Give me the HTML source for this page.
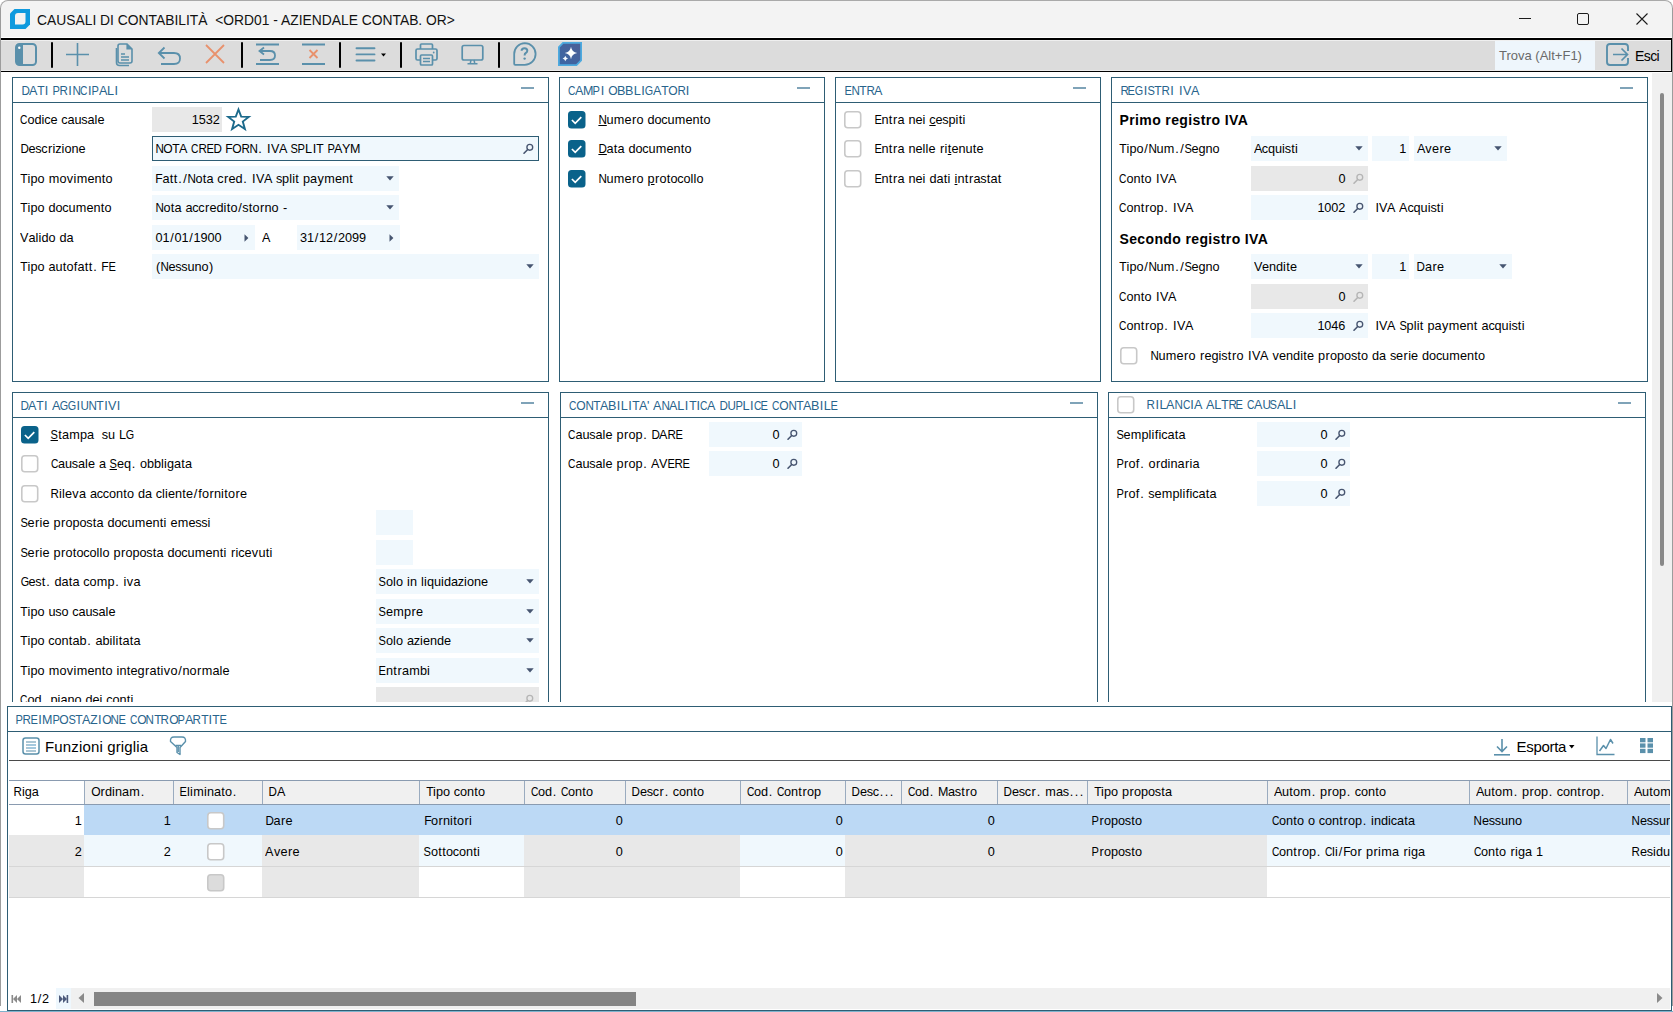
<!DOCTYPE html><html><head><meta charset="utf-8"><style>
html,body{margin:0;padding:0;width:1673px;height:1012px;overflow:hidden;background:#fff;}
body{position:relative;font-family:"Liberation Sans",sans-serif;}
.t{position:absolute;white-space:nowrap;}
.tt{position:absolute;white-space:nowrap;}
.tt b{position:absolute;top:0;font-weight:400;}
.r{position:absolute;box-sizing:border-box;}
.i{position:absolute;overflow:visible;}
.u{text-decoration:underline;text-underline-offset:1px;}
</style></head><body>
<div class="r" style="left:0px;top:0px;width:1673px;height:1012px;background:#ffffff;"></div>
<div class="r" style="left:0px;top:0px;width:1673px;height:38px;background:#f3f3f3;border-radius:8px 8px 0 0;border:1px solid #a9a9a9;border-bottom:none;"></div>
<div class="r" style="left:1px;top:37px;width:1671px;height:1px;background:#ffffff;"></div>
<svg class="i" style="left:10px;top:9px;" width="20" height="20" viewBox="0 0 20 20"><path d="M4.5 0H20V15.5L15.5 20H0V4.5Z" fill="#0f9ade"/><path d="M8 4H15.5V12.5Q15.5 15.5 12.5 15.5H5V7Q5 4 8 4Z" fill="#f3f3f3"/></svg>
<div class="t" style="left:37px;top:11.88px;font-size:15.5px;line-height:15.5px;color:#111;font-weight:400;transform:scaleX(0.893);transform-origin:0 0;">CAUSALI DI CONTABILITÀ &nbsp;&lt;ORD01 - AZIENDALE CONTAB. OR&gt;</div>
<div class="r" style="left:1519px;top:18px;width:12px;height:1px;background:#1b1b1b;"></div>
<div class="r" style="left:1577px;top:13px;width:12px;height:12px;background:transparent;border:1px solid #1b1b1b;border-radius:2px;"></div>
<svg class="i" style="left:1636px;top:13px;" width="12" height="12" viewBox="0 0 12 12"><path d="M0.5 0.5L11.5 11.5M11.5 0.5L0.5 11.5" stroke="#1b1b1b" stroke-width="1.1"/></svg>
<div class="r" style="left:0px;top:8px;width:1px;height:998px;background:#9c9c9c;"></div>
<div class="r" style="left:1672px;top:8px;width:1px;height:998px;background:#9c9c9c;"></div>
<div class="r" style="left:0px;top:1011px;width:1673px;height:1px;background:#7fb2cc;"></div>
<div class="r" style="left:1px;top:38px;width:1671px;height:34px;background:#dcdcdc;border-top:2px solid #000;border-bottom:1px solid #000;border-right:1px solid #000;"></div>
<div class="r" style="left:1px;top:40px;width:1670px;height:1px;background:#efefef;"></div>
<div class="r" style="left:1px;top:70px;width:1670px;height:1px;background:#ebebeb;"></div>
<div class="r" style="left:51px;top:42px;width:2px;height:26px;background:#000;border-radius:1px;width:1.6px;"></div>
<div class="r" style="left:241px;top:42px;width:2px;height:26px;background:#000;border-radius:1px;width:1.6px;"></div>
<div class="r" style="left:339px;top:42px;width:2px;height:26px;background:#000;border-radius:1px;width:1.6px;"></div>
<div class="r" style="left:400px;top:42px;width:2px;height:26px;background:#000;border-radius:1px;width:1.6px;"></div>
<div class="r" style="left:498px;top:42px;width:2px;height:26px;background:#000;border-radius:1px;width:1.6px;"></div>
<svg class="i" style="left:15px;top:43px;" width="22" height="23" viewBox="0 0 22 23"><rect x="1" y="1" width="20" height="21" rx="3.5" fill="none" stroke="#5a90ab" stroke-width="2"/><path d="M4 1H8V22H4Q1 22 1 19V4Q1 1 4 1Z" fill="#5a90ab"/><circle cx="4.3" cy="4.8" r="1.2" fill="#fff"/></svg>
<svg class="i" style="left:66px;top:43px;" width="23" height="23" viewBox="0 0 23 23"><path d="M11.5 0V23M0 11.5H23" stroke="#5a90ab" stroke-width="1.6"/></svg>
<svg class="i" style="left:114px;top:43px;" width="20" height="24" viewBox="0 0 20 24"><path d="M6 1H13L18 6V18Q18 20 16 20H6Q4 20 4 18V3Q4 1 6 1Z" fill="none" stroke="#5a90ab" stroke-width="1.6"/><path d="M13 1V6H18" fill="#5a90ab" stroke="#5a90ab" stroke-width="1.2"/><path d="M2.5 5V19.5Q2.5 22.5 5.5 22.5H15" fill="none" stroke="#5a90ab" stroke-width="1.6"/><path d="M7 11H11M7 14H15M7 17H15" stroke="#5a90ab" stroke-width="1.3"/></svg>
<svg class="i" style="left:157px;top:46px;" width="25" height="19" viewBox="0 0 25 19"><path d="M2 7H17Q23 7 23 12.5Q23 18 17 18H4" fill="none" stroke="#5a90ab" stroke-width="1.8"/><path d="M7.5 1.5L1.8 7L7.5 12.5" fill="none" stroke="#5a90ab" stroke-width="1.8"/></svg>
<svg class="i" style="left:205px;top:44px;" width="20" height="20" viewBox="0 0 20 20"><path d="M1 1L19 19M19 1L1 19" stroke="#e8916c" stroke-width="1.8"/></svg>
<svg class="i" style="left:256px;top:43px;" width="23" height="23" viewBox="0 0 23 23"><path d="M0 1.5H23M0 21H23" stroke="#5a90ab" stroke-width="1.8"/><path d="M4 8H14Q19 8 19 12.5Q19 17 14 17H4" fill="none" stroke="#5a90ab" stroke-width="1.8"/><path d="M8 4.5L3.5 8L8 11.5" fill="none" stroke="#5a90ab" stroke-width="1.8"/></svg>
<svg class="i" style="left:302px;top:43px;" width="23" height="23" viewBox="0 0 23 23"><path d="M0 1.5H23M0 21H23" stroke="#5a90ab" stroke-width="1.8"/><path d="M7.5 7L15.5 15M15.5 7L7.5 15" stroke="#e8916c" stroke-width="1.8"/></svg>
<svg class="i" style="left:355px;top:46px;" width="33" height="17" viewBox="0 0 33 17"><path d="M1.5 2.3H19.5M1.5 8.4H19.5M1.5 14.5H19.5" stroke="#5a90ab" stroke-width="1.9" stroke-linecap="round"/><path d="M26 7.5H31L28.5 10.5Z" fill="#000"/></svg>
<svg class="i" style="left:414px;top:43px;" width="25" height="23" viewBox="0 0 25 23"><path d="M6.5 6V2Q6.5 1 7.5 1H17.5Q18.5 1 18.5 2V6" fill="none" stroke="#5a90ab" stroke-width="1.7"/><path d="M6.5 17H3.5Q2 17 2 15.5V7.5Q2 6 3.5 6H21.5Q23 6 23 7.5V15.5Q23 17 21.5 17H18.5" fill="none" stroke="#5a90ab" stroke-width="1.7"/><rect x="6.5" y="12" width="12" height="10" rx="1" fill="none" stroke="#5a90ab" stroke-width="1.7"/><path d="M9 15.5H16M9 18.5H16" stroke="#5a90ab" stroke-width="1.4"/><circle cx="19.7" cy="9.5" r="0.9" fill="#5a90ab"/></svg>
<svg class="i" style="left:460px;top:44px;" width="25" height="21" viewBox="0 0 25 21"><rect x="2.2" y="1.5" width="20.6" height="14.5" rx="1.8" fill="none" stroke="#5a90ab" stroke-width="1.7"/><path d="M11 16L10.3 19M14 16L14.7 19M7.5 19.8H17.5" stroke="#5a90ab" stroke-width="1.5"/></svg>
<svg class="i" style="left:512px;top:42.3px;" width="25" height="24" viewBox="0 0 25 24"><path d="M12.8 1.2A10.8 10.8 0 0 1 12.8 22.8H3.2Q2.2 22.8 2.2 21.8V12A10.8 10.8 0 0 1 12.8 1.2Z" fill="none" stroke="#5a90ab" stroke-width="1.8"/><path d="M9.6 8.8Q9.6 6.3 12.5 6.3Q15.3 6.3 15.3 8.8Q15.3 10.3 13.8 11Q12.6 11.6 12.6 13.6" fill="none" stroke="#5a90ab" stroke-width="2"/><circle cx="12.6" cy="16.6" r="1.2" fill="#5a90ab"/></svg>
<svg class="i" style="left:558px;top:42px;" width="24" height="24" viewBox="0 0 24 24"><defs><linearGradient id="ag" x1="0" y1="1" x2="1" y2="0"><stop offset="0" stop-color="#3b66a6"/><stop offset="1" stop-color="#4d5f95"/></linearGradient></defs><path d="M5 0.9H23.1V18.5L18.5 23.1H0.9V5Z" fill="url(#ag)" stroke="#4eaadf" stroke-width="1.8"/><path d="M13 4.8Q13.8 10.2 19.2 11Q13.8 11.8 13 17.2Q12.2 11.8 6.8 11Q12.2 10.2 13 4.8Z" fill="#fff"/><path d="M7.3 13.8Q7.8 16 10 16.5Q7.8 17 7.3 19.2Q6.8 17 4.6 16.5Q6.8 16 7.3 13.8Z" fill="#f4f8ff"/></svg>
<div class="r" style="left:1495px;top:41px;width:100px;height:29px;background:#eef6fc;"></div>
<div class="t" style="left:1499px;top:49.00px;font-size:13px;line-height:13px;color:#6a6a6a;font-weight:400;">Trova (Alt+F1)</div>
<svg class="i" style="left:1606px;top:43px;" width="23" height="23" viewBox="0 0 23 23"><path d="M22 8V4Q22 1 19 1H4Q1 1 1 4V19Q1 22 4 22H19Q22 22 22 19V15" fill="none" stroke="#5a90ab" stroke-width="1.9"/><path d="M7 11.5H21.5M15.5 5.5L21.5 11.5L15.5 17.5" fill="none" stroke="#5a90ab" stroke-width="1.7"/></svg>
<div class="t" style="left:1635px;top:49.15px;font-size:14px;line-height:14px;color:#000;font-weight:400;letter-spacing:-0.6px;">Esci</div>
<div class="r" style="left:1652px;top:73px;width:20px;height:629px;background:#f0f0f0;"></div>
<div class="r" style="left:1660px;top:93px;width:3.5px;height:473px;background:#888888;border-radius:2px;"></div>
<div class="r" style="left:12px;top:77px;width:537px;height:305px;background:#fff;border:1px solid #2e5d74;border-bottom:1px solid #2e5d74;"></div>
<div class="r" style="left:12px;top:102px;width:537px;height:1px;background:#2e5d74;"></div>
<div class="tt" style="left:21.2px;top:84.85px;font-size:12.7px;line-height:12.7px;color:#28648c;"><b style="left:-0.59px;transform:scaleX(0.916)">D</b><b style="left:7.76px;transform:scaleX(0.992)">A</b><b style="left:15.62px;transform:scaleX(0.954)">T</b><b style="left:23.54px">I</b><b style="left:30.86px;transform:scaleX(0.874)">P</b><b style="left:38.01px;transform:scaleX(0.916)">R</b><b style="left:47.14px">I</b><b style="left:50.61px;transform:scaleX(0.916)">N</b><b style="left:58.11px;transform:scaleX(0.807)">C</b><b style="left:66.74px">I</b><b style="left:70.06px;transform:scaleX(0.874)">P</b><b style="left:77.56px;transform:scaleX(0.992)">A</b><b style="left:85.77px">L</b><b style="left:93.34px">I</b></div>
<div class="r" style="left:521px;top:87px;width:13px;height:2px;background:#7fa3b8;"></div>
<div class="r" style="left:559px;top:77px;width:266px;height:305px;background:#fff;border:1px solid #2e5d74;border-bottom:1px solid #2e5d74;"></div>
<div class="r" style="left:559px;top:102px;width:266px;height:1px;background:#2e5d74;"></div>
<div class="tt" style="left:568.1px;top:84.85px;font-size:12.7px;line-height:12.7px;color:#28648c;"><b style="left:-1.09px;transform:scaleX(0.807)">C</b><b style="left:6.76px;transform:scaleX(0.992)">A</b><b style="left:14.71px;transform:scaleX(0.983)">M</b><b style="left:24.26px;transform:scaleX(0.874)">P</b><b style="left:32.54px">I</b><b style="left:40.16px;transform:scaleX(0.952)">O</b><b style="left:49.36px;transform:scaleX(0.992)">B</b><b style="left:57.36px;transform:scaleX(0.992)">B</b><b style="left:65.57px">L</b><b style="left:73.14px">I</b><b style="left:76.26px;transform:scaleX(0.850)">G</b><b style="left:84.96px;transform:scaleX(0.992)">A</b><b style="left:92.82px;transform:scaleX(0.954)">T</b><b style="left:99.76px;transform:scaleX(0.952)">O</b><b style="left:108.61px;transform:scaleX(0.916)">R</b><b style="left:117.74px">I</b></div>
<div class="r" style="left:797px;top:87px;width:13px;height:2px;background:#7fa3b8;"></div>
<div class="r" style="left:835px;top:77px;width:266px;height:305px;background:#fff;border:1px solid #2e5d74;border-bottom:1px solid #2e5d74;"></div>
<div class="r" style="left:835px;top:102px;width:266px;height:1px;background:#2e5d74;"></div>
<div class="tt" style="left:844.3px;top:84.85px;font-size:12.7px;line-height:12.7px;color:#28648c;"><b style="left:-0.74px;transform:scaleX(0.874)">E</b><b style="left:6.41px;transform:scaleX(0.916)">N</b><b style="left:14.62px;transform:scaleX(0.954)">T</b><b style="left:21.41px;transform:scaleX(0.916)">R</b><b style="left:29.76px;transform:scaleX(0.992)">A</b></div>
<div class="r" style="left:1073px;top:87px;width:13px;height:2px;background:#7fa3b8;"></div>
<div class="r" style="left:1111px;top:77px;width:537px;height:305px;background:#fff;border:1px solid #2e5d74;border-bottom:1px solid #2e5d74;"></div>
<div class="r" style="left:1111px;top:102px;width:537px;height:1px;background:#2e5d74;"></div>
<div class="tt" style="left:1120.2px;top:84.85px;font-size:12.7px;line-height:12.7px;color:#28648c;"><b style="left:-0.59px;transform:scaleX(0.916)">R</b><b style="left:7.26px;transform:scaleX(0.874)">E</b><b style="left:14.06px;transform:scaleX(0.850)">G</b><b style="left:23.54px">I</b><b style="left:26.86px;transform:scaleX(0.874)">S</b><b style="left:34.22px;transform:scaleX(0.954)">T</b><b style="left:41.01px;transform:scaleX(0.916)">R</b><b style="left:50.14px">I</b><b style="left:58.74px">I</b><b style="left:62.56px;transform:scaleX(0.992)">V</b><b style="left:70.56px;transform:scaleX(0.992)">A</b></div>
<div class="r" style="left:1620px;top:87px;width:13px;height:2px;background:#7fa3b8;"></div>
<div class="tt" style="left:20.5px;top:113.85px;font-size:12.7px;line-height:12.7px;color:#000;"><b style="left:-1.09px;transform:scaleX(0.807)">C</b><b style="left:6.97px">o</b><b style="left:13.97px">d</b><b style="left:21.09px">i</b><b style="left:23.82px">c</b><b style="left:29.97px">e</b><b style="left:40.83px">c</b><b style="left:46.97px">a</b><b style="left:53.97px">u</b><b style="left:60.83px">s</b><b style="left:66.97px">a</b><b style="left:74.09px">l</b><b style="left:76.97px">e</b></div>
<div class="tt" style="left:20.5px;top:142.85px;font-size:12.7px;line-height:12.7px;color:#000;"><b style="left:-0.59px;transform:scaleX(0.916)">D</b><b style="left:7.97px">e</b><b style="left:14.82px">s</b><b style="left:20.82px">c</b><b style="left:27.39px">r</b><b style="left:32.09px">i</b><b style="left:34.83px">z</b><b style="left:41.09px">i</b><b style="left:43.97px">o</b><b style="left:50.97px">n</b><b style="left:57.97px">e</b></div>
<div class="tt" style="left:20.5px;top:172.85px;font-size:12.7px;line-height:12.7px;color:#000;"><b style="left:-0.38px;transform:scaleX(0.954)">T</b><b style="left:7.09px">i</b><b style="left:9.97px">p</b><b style="left:16.97px">o</b><b style="left:28.21px">m</b><b style="left:38.97px">o</b><b style="left:46.33px">v</b><b style="left:53.09px">i</b><b style="left:56.21px">m</b><b style="left:66.97px">e</b><b style="left:73.97px">n</b><b style="left:81.24px">t</b><b style="left:84.97px">o</b></div>
<div class="tt" style="left:20.5px;top:201.85px;font-size:12.7px;line-height:12.7px;color:#000;"><b style="left:-0.38px;transform:scaleX(0.954)">T</b><b style="left:7.09px">i</b><b style="left:9.97px">p</b><b style="left:16.97px">o</b><b style="left:27.97px">d</b><b style="left:34.97px">o</b><b style="left:41.83px">c</b><b style="left:47.97px">u</b><b style="left:55.21px">m</b><b style="left:65.97px">e</b><b style="left:72.97px">n</b><b style="left:80.24px">t</b><b style="left:83.97px">o</b></div>
<div class="tt" style="left:20.5px;top:231.85px;font-size:12.7px;line-height:12.7px;color:#000;"><b style="left:-0.24px;transform:scaleX(0.992)">V</b><b style="left:7.97px">a</b><b style="left:15.09px">l</b><b style="left:18.09px">i</b><b style="left:20.97px">d</b><b style="left:27.97px">o</b><b style="left:38.97px">d</b><b style="left:45.97px">a</b></div>
<div class="tt" style="left:20.5px;top:260.85px;font-size:12.7px;line-height:12.7px;color:#000;"><b style="left:-0.38px;transform:scaleX(0.954)">T</b><b style="left:7.09px">i</b><b style="left:9.97px">p</b><b style="left:16.97px">o</b><b style="left:27.97px">a</b><b style="left:34.97px">u</b><b style="left:42.24px">t</b><b style="left:45.97px">o</b><b style="left:53.24px">f</b><b style="left:56.97px">a</b><b style="left:64.24px">t</b><b style="left:68.24px">t</b><b style="left:72.74px">.</b><b style="left:80.62px;transform:scaleX(0.954)">F</b><b style="left:87.26px;transform:scaleX(0.874)">E</b></div>
<div class="r" style="left:152px;top:107px;width:70px;height:25px;background:#e8e8e8;"></div>
<div class="tt" style="left:191.7px;top:113.85px;font-size:12.7px;line-height:12.7px;color:#000;"><b style="left:-0.03px">1</b><b style="left:6.97px">5</b><b style="left:13.97px">3</b><b style="left:20.97px">2</b></div>
<svg class="i" style="left:227px;top:108px;" width="23" height="23" viewBox="0 0 23 23"><path d="M11.5 1.5L14.2 8.6L21.8 8.9L15.8 13.6L17.9 21L11.5 16.8L5.1 21L7.2 13.6L1.2 8.9L8.8 8.6Z" fill="none" stroke="#1c6a8c" stroke-width="1.9" stroke-linejoin="miter"/></svg>
<div class="r" style="left:152px;top:136px;width:387px;height:25px;background:#f0f8fd;border:1px solid #2e5d74;"></div>
<div class="tt" style="left:155.5px;top:142.85px;font-size:12.7px;line-height:12.7px;color:#000;"><b style="left:-0.59px;transform:scaleX(0.916)">N</b><b style="left:7.56px;transform:scaleX(0.952)">O</b><b style="left:16.62px;transform:scaleX(0.954)">T</b><b style="left:23.76px;transform:scaleX(0.992)">A</b><b style="left:34.91px;transform:scaleX(0.807)">C</b><b style="left:42.41px;transform:scaleX(0.916)">R</b><b style="left:50.26px;transform:scaleX(0.874)">E</b><b style="left:57.41px;transform:scaleX(0.916)">D</b><b style="left:69.62px;transform:scaleX(0.954)">F</b><b style="left:76.56px;transform:scaleX(0.952)">O</b><b style="left:85.41px;transform:scaleX(0.916)">R</b><b style="left:93.41px;transform:scaleX(0.916)">N</b><b style="left:102.74px">.</b><b style="left:111.54px">I</b><b style="left:115.36px;transform:scaleX(0.992)">V</b><b style="left:123.36px;transform:scaleX(0.992)">A</b><b style="left:134.86px;transform:scaleX(0.874)">S</b><b style="left:141.86px;transform:scaleX(0.874)">P</b><b style="left:149.57px">L</b><b style="left:157.14px">I</b><b style="left:160.82px;transform:scaleX(0.954)">T</b><b style="left:171.46px;transform:scaleX(0.874)">P</b><b style="left:178.96px;transform:scaleX(0.992)">A</b><b style="left:186.96px;transform:scaleX(0.992)">Y</b><b style="left:194.91px;transform:scaleX(0.983)">M</b></div>
<svg class="i" style="left:523px;top:143px;" width="11" height="11" viewBox="0 0 11 11"><circle cx="6.8" cy="4.3" r="2.9" fill="none" stroke="#475570" stroke-width="1.35"/><path d="M4.7 6.5L1 10.2" stroke="#475570" stroke-width="1.6" stroke-linecap="round"/></svg>
<div class="r" style="left:152px;top:166px;width:247px;height:25px;background:#f0f8fd;"></div>
<div class="tt" style="left:155.5px;top:172.85px;font-size:12.7px;line-height:12.7px;color:#000;"><b style="left:-0.38px;transform:scaleX(0.954)">F</b><b style="left:6.97px">a</b><b style="left:14.24px">t</b><b style="left:18.24px">t</b><b style="left:22.74px">.</b><b style="left:27.74px">/</b><b style="left:31.41px;transform:scaleX(0.916)">N</b><b style="left:39.97px">o</b><b style="left:47.24px">t</b><b style="left:50.97px">a</b><b style="left:61.83px">c</b><b style="left:68.39px">r</b><b style="left:72.97px">e</b><b style="left:79.97px">d</b><b style="left:87.74px">.</b><b style="left:96.54px">I</b><b style="left:100.36px;transform:scaleX(0.992)">V</b><b style="left:108.36px;transform:scaleX(0.992)">A</b><b style="left:120.42px">s</b><b style="left:126.57px">p</b><b style="left:133.69px">l</b><b style="left:136.69px">i</b><b style="left:139.84px">t</b><b style="left:147.57px">p</b><b style="left:154.57px">a</b><b style="left:161.92px">y</b><b style="left:168.81px">m</b><b style="left:179.57px">e</b><b style="left:186.57px">n</b><b style="left:193.84px">t</b></div>
<svg class="i" style="left:385.5px;top:176px;" width="8" height="5" viewBox="0 0 8 5"><path d="M0.3 0.3H7.7L4 4.4Z" fill="#465570"/></svg>
<div class="r" style="left:152px;top:195px;width:247px;height:25px;background:#f0f8fd;"></div>
<div class="tt" style="left:155.5px;top:201.85px;font-size:12.7px;line-height:12.7px;color:#000;"><b style="left:-0.59px;transform:scaleX(0.916)">N</b><b style="left:7.97px">o</b><b style="left:15.24px">t</b><b style="left:18.97px">a</b><b style="left:29.97px">a</b><b style="left:36.83px">c</b><b style="left:42.83px">c</b><b style="left:49.39px">r</b><b style="left:53.97px">e</b><b style="left:60.97px">d</b><b style="left:68.09px">i</b><b style="left:71.24px">t</b><b style="left:74.97px">o</b><b style="left:82.74px">/</b><b style="left:86.83px">s</b><b style="left:93.24px">t</b><b style="left:96.97px">o</b><b style="left:104.39px">r</b><b style="left:108.97px">n</b><b style="left:115.97px">o</b><b style="left:127.39px">-</b></div>
<svg class="i" style="left:385.5px;top:205px;" width="8" height="5" viewBox="0 0 8 5"><path d="M0.3 0.3H7.7L4 4.4Z" fill="#465570"/></svg>
<div class="r" style="left:152px;top:225px;width:103px;height:25px;background:#f0f8fd;"></div>
<div class="tt" style="left:155.5px;top:231.85px;font-size:12.7px;line-height:12.7px;color:#000;"><b style="left:-0.03px">0</b><b style="left:6.97px">1</b><b style="left:14.74px">/</b><b style="left:18.97px">0</b><b style="left:25.97px">1</b><b style="left:33.74px">/</b><b style="left:37.97px">1</b><b style="left:44.97px">9</b><b style="left:51.97px">0</b><b style="left:58.97px">0</b></div>
<svg class="i" style="left:243.5px;top:233.5px;" width="5" height="8" viewBox="0 0 5 8"><path d="M0.5 0.3V7.7L4.4 4Z" fill="#465570"/></svg>
<div class="tt" style="left:262px;top:231.85px;font-size:12.7px;line-height:12.7px;color:#000;"><b style="left:-0.24px;transform:scaleX(0.992)">A</b></div>
<div class="r" style="left:297px;top:225px;width:103px;height:25px;background:#f0f8fd;"></div>
<div class="tt" style="left:300px;top:231.85px;font-size:12.7px;line-height:12.7px;color:#000;"><b style="left:-0.03px">3</b><b style="left:6.97px">1</b><b style="left:14.74px">/</b><b style="left:18.97px">1</b><b style="left:25.97px">2</b><b style="left:33.74px">/</b><b style="left:37.97px">2</b><b style="left:44.97px">0</b><b style="left:51.97px">9</b><b style="left:58.97px">9</b></div>
<svg class="i" style="left:388.5px;top:233.5px;" width="5" height="8" viewBox="0 0 5 8"><path d="M0.5 0.3V7.7L4.4 4Z" fill="#465570"/></svg>
<div class="r" style="left:152px;top:254px;width:387px;height:25px;background:#f0f8fd;"></div>
<div class="tt" style="left:155.5px;top:260.85px;font-size:12.7px;line-height:12.7px;color:#000;"><b style="left:0.39px">(</b><b style="left:4.41px;transform:scaleX(0.916)">N</b><b style="left:12.97px">e</b><b style="left:19.82px">s</b><b style="left:25.82px">s</b><b style="left:31.97px">u</b><b style="left:38.97px">n</b><b style="left:45.97px">o</b><b style="left:53.39px">)</b></div>
<svg class="i" style="left:525.5px;top:264px;" width="8" height="5" viewBox="0 0 8 5"><path d="M0.3 0.3H7.7L4 4.4Z" fill="#465570"/></svg>
<svg class="i" style="left:568px;top:110.5px;" width="18" height="18" viewBox="0 0 18 18"><rect x="0" y="0" width="17.5" height="17.5" rx="3.5" fill="#0a628a"/><path d="M3.9 9L7.2 12.3L13.3 6.1" fill="none" stroke="#fff" stroke-width="1.7"/></svg>
<div class="tt" style="left:598.5px;top:113.85px;font-size:12.7px;line-height:12.7px;color:#000;"><b class="u" style="left:-0.59px;transform:scaleX(0.916)">N</b><b style="left:7.97px">u</b><b style="left:15.21px">m</b><b style="left:25.97px">e</b><b style="left:33.39px">r</b><b style="left:37.97px">o</b><b style="left:48.97px">d</b><b style="left:55.97px">o</b><b style="left:62.83px">c</b><b style="left:68.97px">u</b><b style="left:76.21px">m</b><b style="left:86.97px">e</b><b style="left:93.97px">n</b><b style="left:101.24px">t</b><b style="left:104.97px">o</b></div>
<svg class="i" style="left:568px;top:139.5px;" width="18" height="18" viewBox="0 0 18 18"><rect x="0" y="0" width="17.5" height="17.5" rx="3.5" fill="#0a628a"/><path d="M3.9 9L7.2 12.3L13.3 6.1" fill="none" stroke="#fff" stroke-width="1.7"/></svg>
<div class="tt" style="left:598.5px;top:142.85px;font-size:12.7px;line-height:12.7px;color:#000;"><b class="u" style="left:-0.59px;transform:scaleX(0.916)">D</b><b style="left:7.97px">a</b><b style="left:15.24px">t</b><b style="left:18.97px">a</b><b style="left:29.97px">d</b><b style="left:36.97px">o</b><b style="left:43.83px">c</b><b style="left:49.97px">u</b><b style="left:57.21px">m</b><b style="left:67.97px">e</b><b style="left:74.97px">n</b><b style="left:82.24px">t</b><b style="left:85.97px">o</b></div>
<svg class="i" style="left:568px;top:169.5px;" width="18" height="18" viewBox="0 0 18 18"><rect x="0" y="0" width="17.5" height="17.5" rx="3.5" fill="#0a628a"/><path d="M3.9 9L7.2 12.3L13.3 6.1" fill="none" stroke="#fff" stroke-width="1.7"/></svg>
<div class="tt" style="left:598.5px;top:172.85px;font-size:12.7px;line-height:12.7px;color:#000;"><b style="left:-0.59px;transform:scaleX(0.916)">N</b><b style="left:7.97px">u</b><b style="left:15.21px">m</b><b style="left:25.97px">e</b><b style="left:33.39px">r</b><b style="left:37.97px">o</b><b class="u" style="left:48.97px">p</b><b style="left:56.39px">r</b><b style="left:60.97px">o</b><b style="left:68.24px">t</b><b style="left:71.97px">o</b><b style="left:78.83px">c</b><b style="left:84.97px">o</b><b style="left:92.09px">l</b><b style="left:95.09px">l</b><b style="left:97.97px">o</b></div>
<svg class="i" style="left:844px;top:110.5px;" width="18" height="18" viewBox="0 0 18 18"><rect x="0.8" y="0.8" width="15.9" height="15.9" rx="3" fill="#ffffff" stroke="#c8c8c8" stroke-width="1.6"/></svg>
<div class="tt" style="left:874.5px;top:113.85px;font-size:12.7px;line-height:12.7px;color:#000;"><b style="left:-0.74px;transform:scaleX(0.874)">E</b><b style="left:6.97px">n</b><b style="left:14.24px">t</b><b style="left:18.39px">r</b><b style="left:22.97px">a</b><b style="left:33.97px">n</b><b style="left:40.97px">e</b><b style="left:48.09px">i</b><b class="u" style="left:54.83px">c</b><b style="left:60.97px">e</b><b style="left:67.83px">s</b><b style="left:73.97px">p</b><b style="left:81.09px">i</b><b style="left:84.24px">t</b><b style="left:88.09px">i</b></div>
<svg class="i" style="left:844px;top:139.5px;" width="18" height="18" viewBox="0 0 18 18"><rect x="0.8" y="0.8" width="15.9" height="15.9" rx="3" fill="#ffffff" stroke="#c8c8c8" stroke-width="1.6"/></svg>
<div class="tt" style="left:874.5px;top:142.85px;font-size:12.7px;line-height:12.7px;color:#000;"><b style="left:-0.74px;transform:scaleX(0.874)">E</b><b style="left:6.97px">n</b><b style="left:14.24px">t</b><b style="left:18.39px">r</b><b style="left:22.97px">a</b><b style="left:33.97px">n</b><b style="left:40.97px">e</b><b style="left:48.09px">l</b><b style="left:51.09px">l</b><b style="left:53.97px">e</b><b style="left:65.39px">r</b><b style="left:70.09px">i</b><b class="u" style="left:73.24px">t</b><b style="left:76.97px">e</b><b style="left:83.97px">n</b><b style="left:90.97px">u</b><b style="left:98.24px">t</b><b style="left:101.97px">e</b></div>
<svg class="i" style="left:844px;top:169.5px;" width="18" height="18" viewBox="0 0 18 18"><rect x="0.8" y="0.8" width="15.9" height="15.9" rx="3" fill="#ffffff" stroke="#c8c8c8" stroke-width="1.6"/></svg>
<div class="tt" style="left:874.5px;top:172.85px;font-size:12.7px;line-height:12.7px;color:#000;"><b style="left:-0.74px;transform:scaleX(0.874)">E</b><b style="left:6.97px">n</b><b style="left:14.24px">t</b><b style="left:18.39px">r</b><b style="left:22.97px">a</b><b style="left:33.97px">n</b><b style="left:40.97px">e</b><b style="left:48.09px">i</b><b style="left:54.97px">d</b><b style="left:61.97px">a</b><b style="left:69.24px">t</b><b style="left:73.09px">i</b><b class="u" style="left:80.09px">i</b><b style="left:82.97px">n</b><b style="left:90.24px">t</b><b style="left:94.39px">r</b><b style="left:98.97px">a</b><b style="left:105.83px">s</b><b style="left:112.24px">t</b><b style="left:115.97px">a</b><b style="left:123.24px">t</b></div>
<div class="t" style="left:1119.5px;top:113.15px;font-size:14px;line-height:14px;color:#000;font-weight:700;letter-spacing:0.38px;">Primo registro IVA</div>
<div class="tt" style="left:1119.5px;top:142.85px;font-size:12.7px;line-height:12.7px;color:#000;"><b style="left:-0.38px;transform:scaleX(0.954)">T</b><b style="left:7.09px">i</b><b style="left:9.97px">p</b><b style="left:16.97px">o</b><b style="left:24.74px">/</b><b style="left:28.41px;transform:scaleX(0.916)">N</b><b style="left:36.97px">u</b><b style="left:44.21px">m</b><b style="left:55.74px">.</b><b style="left:60.74px">/</b><b style="left:64.26px;transform:scaleX(0.874)">S</b><b style="left:71.97px">e</b><b style="left:78.97px">g</b><b style="left:85.97px">n</b><b style="left:92.97px">o</b></div>
<div class="r" style="left:1251px;top:136px;width:117px;height:25px;background:#f0f8fd;"></div>
<div class="tt" style="left:1254px;top:142.85px;font-size:12.7px;line-height:12.7px;color:#000;"><b style="left:-0.24px;transform:scaleX(0.992)">A</b><b style="left:7.83px">c</b><b style="left:13.97px">q</b><b style="left:20.97px">u</b><b style="left:28.09px">i</b><b style="left:30.82px">s</b><b style="left:37.24px">t</b><b style="left:41.09px">i</b></div>
<svg class="i" style="left:1354.5px;top:146px;" width="8" height="5" viewBox="0 0 8 5"><path d="M0.3 0.3H7.7L4 4.4Z" fill="#465570"/></svg>
<div class="r" style="left:1372px;top:136px;width:37px;height:25px;background:#f0f8fd;"></div>
<div class="tt" style="left:1399.2px;top:142.85px;font-size:12.7px;line-height:12.7px;color:#000;"><b style="left:-0.03px">1</b></div>
<div class="r" style="left:1414px;top:136px;width:93px;height:25px;background:#f0f8fd;"></div>
<div class="tt" style="left:1417px;top:142.85px;font-size:12.7px;line-height:12.7px;color:#000;"><b style="left:-0.24px;transform:scaleX(0.992)">A</b><b style="left:8.32px">v</b><b style="left:14.97px">e</b><b style="left:22.39px">r</b><b style="left:26.97px">e</b></div>
<svg class="i" style="left:1493.5px;top:146px;" width="8" height="5" viewBox="0 0 8 5"><path d="M0.3 0.3H7.7L4 4.4Z" fill="#465570"/></svg>
<div class="tt" style="left:1119.5px;top:172.85px;font-size:12.7px;line-height:12.7px;color:#000;"><b style="left:-1.09px;transform:scaleX(0.807)">C</b><b style="left:6.97px">o</b><b style="left:13.97px">n</b><b style="left:21.24px">t</b><b style="left:24.97px">o</b><b style="left:36.54px">I</b><b style="left:40.36px;transform:scaleX(0.992)">V</b><b style="left:48.36px;transform:scaleX(0.992)">A</b></div>
<div class="r" style="left:1251px;top:166px;width:117px;height:25px;background:#e8e8e8;"></div>
<div class="tt" style="left:1338.4px;top:172.85px;font-size:12.7px;line-height:12.7px;color:#000;"><b style="left:-0.03px">0</b></div>
<svg class="i" style="left:1352.5px;top:173px;" width="11" height="11" viewBox="0 0 11 11"><circle cx="6.8" cy="4.3" r="2.9" fill="none" stroke="#b5b5b5" stroke-width="1.35"/><path d="M4.7 6.5L1 10.2" stroke="#b5b5b5" stroke-width="1.6" stroke-linecap="round"/></svg>
<div class="tt" style="left:1119.5px;top:201.85px;font-size:12.7px;line-height:12.7px;color:#000;"><b style="left:-1.09px;transform:scaleX(0.807)">C</b><b style="left:6.97px">o</b><b style="left:13.97px">n</b><b style="left:21.24px">t</b><b style="left:25.39px">r</b><b style="left:29.97px">o</b><b style="left:36.97px">p</b><b style="left:44.74px">.</b><b style="left:53.54px">I</b><b style="left:57.36px;transform:scaleX(0.992)">V</b><b style="left:65.36px;transform:scaleX(0.992)">A</b></div>
<div class="r" style="left:1251px;top:195px;width:117px;height:25px;background:#f0f8fd;"></div>
<div class="tt" style="left:1317.4px;top:201.85px;font-size:12.7px;line-height:12.7px;color:#000;"><b style="left:-0.03px">1</b><b style="left:6.97px">0</b><b style="left:13.97px">0</b><b style="left:20.97px">2</b></div>
<svg class="i" style="left:1352.5px;top:202px;" width="11" height="11" viewBox="0 0 11 11"><circle cx="6.8" cy="4.3" r="2.9" fill="none" stroke="#475570" stroke-width="1.35"/><path d="M4.7 6.5L1 10.2" stroke="#475570" stroke-width="1.6" stroke-linecap="round"/></svg>
<div class="tt" style="left:1375px;top:201.85px;font-size:12.7px;line-height:12.7px;color:#000;"><b style="left:0.54px">I</b><b style="left:4.36px;transform:scaleX(0.992)">V</b><b style="left:12.36px;transform:scaleX(0.992)">A</b><b style="left:24.36px;transform:scaleX(0.992)">A</b><b style="left:32.43px">c</b><b style="left:38.57px">q</b><b style="left:45.57px">u</b><b style="left:52.69px">i</b><b style="left:55.43px">s</b><b style="left:61.84px">t</b><b style="left:65.69px">i</b></div>
<div class="t" style="left:1119.5px;top:231.65px;font-size:14px;line-height:14px;color:#000;font-weight:700;letter-spacing:0.37px;">Secondo registro IVA</div>
<div class="tt" style="left:1119.5px;top:260.85px;font-size:12.7px;line-height:12.7px;color:#000;"><b style="left:-0.38px;transform:scaleX(0.954)">T</b><b style="left:7.09px">i</b><b style="left:9.97px">p</b><b style="left:16.97px">o</b><b style="left:24.74px">/</b><b style="left:28.41px;transform:scaleX(0.916)">N</b><b style="left:36.97px">u</b><b style="left:44.21px">m</b><b style="left:55.74px">.</b><b style="left:60.74px">/</b><b style="left:64.26px;transform:scaleX(0.874)">S</b><b style="left:71.97px">e</b><b style="left:78.97px">g</b><b style="left:85.97px">n</b><b style="left:92.97px">o</b></div>
<div class="r" style="left:1251px;top:254px;width:117px;height:25px;background:#f0f8fd;"></div>
<div class="tt" style="left:1254px;top:260.85px;font-size:12.7px;line-height:12.7px;color:#000;"><b style="left:-0.24px;transform:scaleX(0.992)">V</b><b style="left:7.97px">e</b><b style="left:14.97px">n</b><b style="left:21.97px">d</b><b style="left:29.09px">i</b><b style="left:32.24px">t</b><b style="left:35.97px">e</b></div>
<svg class="i" style="left:1354.5px;top:264px;" width="8" height="5" viewBox="0 0 8 5"><path d="M0.3 0.3H7.7L4 4.4Z" fill="#465570"/></svg>
<div class="r" style="left:1372px;top:254px;width:37px;height:25px;background:#f0f8fd;"></div>
<div class="tt" style="left:1399.2px;top:260.85px;font-size:12.7px;line-height:12.7px;color:#000;"><b style="left:-0.03px">1</b></div>
<div class="r" style="left:1414px;top:254px;width:98px;height:25px;background:#f0f8fd;"></div>
<div class="tt" style="left:1417px;top:260.85px;font-size:12.7px;line-height:12.7px;color:#000;"><b style="left:-0.59px;transform:scaleX(0.916)">D</b><b style="left:7.97px">a</b><b style="left:15.39px">r</b><b style="left:19.97px">e</b></div>
<svg class="i" style="left:1498.5px;top:264px;" width="8" height="5" viewBox="0 0 8 5"><path d="M0.3 0.3H7.7L4 4.4Z" fill="#465570"/></svg>
<div class="tt" style="left:1119.5px;top:290.85px;font-size:12.7px;line-height:12.7px;color:#000;"><b style="left:-1.09px;transform:scaleX(0.807)">C</b><b style="left:6.97px">o</b><b style="left:13.97px">n</b><b style="left:21.24px">t</b><b style="left:24.97px">o</b><b style="left:36.54px">I</b><b style="left:40.36px;transform:scaleX(0.992)">V</b><b style="left:48.36px;transform:scaleX(0.992)">A</b></div>
<div class="r" style="left:1251px;top:284px;width:117px;height:25px;background:#e8e8e8;"></div>
<div class="tt" style="left:1338.4px;top:290.85px;font-size:12.7px;line-height:12.7px;color:#000;"><b style="left:-0.03px">0</b></div>
<svg class="i" style="left:1352.5px;top:291px;" width="11" height="11" viewBox="0 0 11 11"><circle cx="6.8" cy="4.3" r="2.9" fill="none" stroke="#b5b5b5" stroke-width="1.35"/><path d="M4.7 6.5L1 10.2" stroke="#b5b5b5" stroke-width="1.6" stroke-linecap="round"/></svg>
<div class="tt" style="left:1119.5px;top:319.85px;font-size:12.7px;line-height:12.7px;color:#000;"><b style="left:-1.09px;transform:scaleX(0.807)">C</b><b style="left:6.97px">o</b><b style="left:13.97px">n</b><b style="left:21.24px">t</b><b style="left:25.39px">r</b><b style="left:29.97px">o</b><b style="left:36.97px">p</b><b style="left:44.74px">.</b><b style="left:53.54px">I</b><b style="left:57.36px;transform:scaleX(0.992)">V</b><b style="left:65.36px;transform:scaleX(0.992)">A</b></div>
<div class="r" style="left:1251px;top:313px;width:117px;height:25px;background:#f0f8fd;"></div>
<div class="tt" style="left:1317.4px;top:319.85px;font-size:12.7px;line-height:12.7px;color:#000;"><b style="left:-0.03px">1</b><b style="left:6.97px">0</b><b style="left:13.97px">4</b><b style="left:20.97px">6</b></div>
<svg class="i" style="left:1352.5px;top:320px;" width="11" height="11" viewBox="0 0 11 11"><circle cx="6.8" cy="4.3" r="2.9" fill="none" stroke="#475570" stroke-width="1.35"/><path d="M4.7 6.5L1 10.2" stroke="#475570" stroke-width="1.6" stroke-linecap="round"/></svg>
<div class="tt" style="left:1375px;top:319.85px;font-size:12.7px;line-height:12.7px;color:#000;"><b style="left:0.54px">I</b><b style="left:4.36px;transform:scaleX(0.992)">V</b><b style="left:12.36px;transform:scaleX(0.992)">A</b><b style="left:23.86px;transform:scaleX(0.874)">S</b><b style="left:31.57px">p</b><b style="left:38.69px">l</b><b style="left:41.69px">i</b><b style="left:44.84px">t</b><b style="left:52.57px">p</b><b style="left:59.57px">a</b><b style="left:66.92px">y</b><b style="left:73.81px">m</b><b style="left:84.57px">e</b><b style="left:91.57px">n</b><b style="left:98.84px">t</b><b style="left:106.57px">a</b><b style="left:113.42px">c</b><b style="left:119.57px">q</b><b style="left:126.57px">u</b><b style="left:133.69px">i</b><b style="left:136.42px">s</b><b style="left:142.84px">t</b><b style="left:146.69px">i</b></div>
<svg class="i" style="left:1120px;top:346.5px;" width="18" height="18" viewBox="0 0 18 18"><rect x="0.8" y="0.8" width="15.9" height="15.9" rx="3" fill="#ffffff" stroke="#c8c8c8" stroke-width="1.6"/></svg>
<div class="tt" style="left:1150.5px;top:349.85px;font-size:12.7px;line-height:12.7px;color:#000;"><b style="left:-0.59px;transform:scaleX(0.916)">N</b><b style="left:7.97px">u</b><b style="left:15.21px">m</b><b style="left:25.97px">e</b><b style="left:33.39px">r</b><b style="left:37.97px">o</b><b style="left:49.39px">r</b><b style="left:53.97px">e</b><b style="left:60.97px">g</b><b style="left:68.09px">i</b><b style="left:70.83px">s</b><b style="left:77.24px">t</b><b style="left:81.39px">r</b><b style="left:85.97px">o</b><b style="left:97.54px">I</b><b style="left:101.36px;transform:scaleX(0.992)">V</b><b style="left:109.36px;transform:scaleX(0.992)">A</b><b style="left:121.92px">v</b><b style="left:128.57px">e</b><b style="left:135.57px">n</b><b style="left:142.57px">d</b><b style="left:149.69px">i</b><b style="left:152.84px">t</b><b style="left:156.57px">e</b><b style="left:167.57px">p</b><b style="left:174.99px">r</b><b style="left:179.57px">o</b><b style="left:186.57px">p</b><b style="left:193.57px">o</b><b style="left:200.42px">s</b><b style="left:206.84px">t</b><b style="left:210.57px">o</b><b style="left:221.57px">d</b><b style="left:228.57px">a</b><b style="left:239.42px">s</b><b style="left:245.57px">e</b><b style="left:252.99px">r</b><b style="left:257.69px">i</b><b style="left:260.57px">e</b><b style="left:271.57px">d</b><b style="left:278.57px">o</b><b style="left:285.43px">c</b><b style="left:291.57px">u</b><b style="left:298.81px">m</b><b style="left:309.57px">e</b><b style="left:316.57px">n</b><b style="left:323.84px">t</b><b style="left:327.57px">o</b></div>
<div style="position:absolute;left:0;top:72px;width:1652px;height:630px;overflow:hidden;">
<div style="position:absolute;left:0;top:-72px;width:1673px;height:1012px;">
<div class="r" style="left:12px;top:392px;width:537px;height:609px;background:#fff;border:1px solid #2e5d74;border-bottom:none;"></div>
<div class="r" style="left:12px;top:417px;width:537px;height:1px;background:#2e5d74;"></div>
<div class="tt" style="left:20.4px;top:399.85px;font-size:12.7px;line-height:12.7px;color:#28648c;"><b style="left:-0.59px;transform:scaleX(0.916)">D</b><b style="left:7.76px;transform:scaleX(0.992)">A</b><b style="left:15.62px;transform:scaleX(0.954)">T</b><b style="left:23.54px">I</b><b style="left:31.36px;transform:scaleX(0.992)">A</b><b style="left:38.66px;transform:scaleX(0.850)">G</b><b style="left:46.66px;transform:scaleX(0.850)">G</b><b style="left:56.14px">I</b><b style="left:59.61px;transform:scaleX(0.916)">U</b><b style="left:67.61px;transform:scaleX(0.916)">N</b><b style="left:75.82px;transform:scaleX(0.954)">T</b><b style="left:83.74px">I</b><b style="left:87.56px;transform:scaleX(0.992)">V</b><b style="left:96.34px">I</b></div>
<div class="r" style="left:521px;top:402px;width:13px;height:2px;background:#7fa3b8;"></div>
<div class="r" style="left:560px;top:392px;width:538px;height:609px;background:#fff;border:1px solid #2e5d74;border-bottom:none;"></div>
<div class="r" style="left:560px;top:417px;width:538px;height:1px;background:#2e5d74;"></div>
<div class="tt" style="left:569.1px;top:399.85px;font-size:12.7px;line-height:12.7px;color:#28648c;"><b style="left:-1.09px;transform:scaleX(0.807)">C</b><b style="left:6.56px;transform:scaleX(0.952)">O</b><b style="left:15.41px;transform:scaleX(0.916)">N</b><b style="left:23.62px;transform:scaleX(0.954)">T</b><b style="left:30.76px;transform:scaleX(0.992)">A</b><b style="left:38.76px;transform:scaleX(0.992)">B</b><b style="left:47.54px">I</b><b style="left:51.57px">L</b><b style="left:59.14px">I</b><b style="left:62.82px;transform:scaleX(0.954)">T</b><b style="left:69.96px;transform:scaleX(0.992)">A</b><b style="left:77.99px;transform:scaleX(0.990)">'</b><b style="left:83.96px;transform:scaleX(0.992)">A</b><b style="left:91.61px;transform:scaleX(0.916)">N</b><b style="left:99.96px;transform:scaleX(0.992)">A</b><b style="left:108.17px">L</b><b style="left:115.74px">I</b><b style="left:119.42px;transform:scaleX(0.954)">T</b><b style="left:127.34px">I</b><b style="left:130.31px;transform:scaleX(0.807)">C</b><b style="left:138.16px;transform:scaleX(0.992)">A</b><b style="left:149.81px;transform:scaleX(0.916)">D</b><b style="left:157.81px;transform:scaleX(0.916)">U</b><b style="left:165.66px;transform:scaleX(0.874)">P</b><b style="left:173.37px">L</b><b style="left:180.94px">I</b><b style="left:183.91px;transform:scaleX(0.807)">C</b><b style="left:191.26px;transform:scaleX(0.874)">E</b><b style="left:201.91px;transform:scaleX(0.807)">C</b><b style="left:209.56px;transform:scaleX(0.952)">O</b><b style="left:218.41px;transform:scaleX(0.916)">N</b><b style="left:226.62px;transform:scaleX(0.954)">T</b><b style="left:233.76px;transform:scaleX(0.992)">A</b><b style="left:241.76px;transform:scaleX(0.992)">B</b><b style="left:250.54px">I</b><b style="left:254.57px">L</b><b style="left:260.86px;transform:scaleX(0.874)">E</b></div>
<div class="r" style="left:1070px;top:402px;width:13px;height:2px;background:#7fa3b8;"></div>
<div class="r" style="left:1108px;top:392px;width:538px;height:609px;background:#fff;border:1px solid #2e5d74;border-bottom:none;"></div>
<div class="r" style="left:1108px;top:417px;width:538px;height:1px;background:#2e5d74;"></div>
<div class="r" style="left:1618px;top:402px;width:13px;height:2px;background:#7fa3b8;"></div>
<svg class="i" style="left:1117px;top:395.5px;" width="18" height="18" viewBox="0 0 18 18"><rect x="0.8" y="0.8" width="15.9" height="15.9" rx="3" fill="#ffffff" stroke="#c8c8c8" stroke-width="1.6"/></svg>
<div class="tt" style="left:1147px;top:399.35px;font-size:12.7px;line-height:12.7px;color:#28648c;"><b style="left:-0.59px;transform:scaleX(0.916)">R</b><b style="left:8.54px">I</b><b style="left:12.57px">L</b><b style="left:19.36px;transform:scaleX(0.992)">A</b><b style="left:27.01px;transform:scaleX(0.916)">N</b><b style="left:34.51px;transform:scaleX(0.807)">C</b><b style="left:43.14px">I</b><b style="left:46.96px;transform:scaleX(0.992)">A</b><b style="left:58.96px;transform:scaleX(0.992)">A</b><b style="left:67.17px">L</b><b style="left:73.82px;transform:scaleX(0.954)">T</b><b style="left:80.61px;transform:scaleX(0.916)">R</b><b style="left:88.46px;transform:scaleX(0.874)">E</b><b style="left:99.11px;transform:scaleX(0.807)">C</b><b style="left:106.96px;transform:scaleX(0.992)">A</b><b style="left:114.61px;transform:scaleX(0.916)">U</b><b style="left:122.46px;transform:scaleX(0.874)">S</b><b style="left:129.96px;transform:scaleX(0.992)">A</b><b style="left:138.17px">L</b><b style="left:145.74px">I</b></div>
<svg class="i" style="left:21px;top:425.5px;" width="18" height="18" viewBox="0 0 18 18"><rect x="0" y="0" width="17.5" height="17.5" rx="3.5" fill="#0a628a"/><path d="M3.9 9L7.2 12.3L13.3 6.1" fill="none" stroke="#fff" stroke-width="1.7"/></svg>
<div class="tt" style="left:51px;top:428.85px;font-size:12.7px;line-height:12.7px;color:#000;"><b class="u" style="left:-0.74px;transform:scaleX(0.874)">S</b><b style="left:7.24px">t</b><b style="left:10.97px">a</b><b style="left:18.21px">m</b><b style="left:28.97px">p</b><b style="left:35.97px">a</b><b style="left:50.83px">s</b><b style="left:56.97px">u</b><b style="left:67.97px">L</b><b style="left:74.06px;transform:scaleX(0.850)">G</b></div>
<svg class="i" style="left:21px;top:454.5px;" width="18" height="18" viewBox="0 0 18 18"><rect x="0.8" y="0.8" width="15.9" height="15.9" rx="3" fill="#ffffff" stroke="#c8c8c8" stroke-width="1.6"/></svg>
<div class="tt" style="left:51px;top:457.85px;font-size:12.7px;line-height:12.7px;color:#000;"><b style="left:-1.09px;transform:scaleX(0.807)">C</b><b style="left:6.97px">a</b><b style="left:13.97px">u</b><b style="left:20.82px">s</b><b style="left:26.97px">a</b><b style="left:34.09px">l</b><b style="left:36.97px">e</b><b style="left:47.97px">a</b><b class="u" style="left:58.26px;transform:scaleX(0.874)">S</b><b style="left:65.97px">e</b><b style="left:72.97px">q</b><b style="left:80.74px">.</b><b style="left:88.97px">o</b><b style="left:95.97px">b</b><b style="left:102.97px">b</b><b style="left:110.09px">l</b><b style="left:113.09px">i</b><b style="left:115.97px">g</b><b style="left:122.97px">a</b><b style="left:130.24px">t</b><b style="left:133.97px">a</b></div>
<svg class="i" style="left:21px;top:484.5px;" width="18" height="18" viewBox="0 0 18 18"><rect x="0.8" y="0.8" width="15.9" height="15.9" rx="3" fill="#ffffff" stroke="#c8c8c8" stroke-width="1.6"/></svg>
<div class="tt" style="left:51px;top:487.85px;font-size:12.7px;line-height:12.7px;color:#000;"><b style="left:-0.59px;transform:scaleX(0.916)">R</b><b style="left:8.09px">i</b><b style="left:11.09px">l</b><b style="left:13.97px">e</b><b style="left:21.32px">v</b><b style="left:27.97px">a</b><b style="left:38.97px">a</b><b style="left:45.83px">c</b><b style="left:51.83px">c</b><b style="left:57.97px">o</b><b style="left:64.97px">n</b><b style="left:72.24px">t</b><b style="left:75.97px">o</b><b style="left:86.97px">d</b><b style="left:93.97px">a</b><b style="left:104.83px">c</b><b style="left:111.09px">l</b><b style="left:114.09px">i</b><b style="left:116.97px">e</b><b style="left:123.97px">n</b><b style="left:131.24px">t</b><b style="left:134.97px">e</b><b style="left:142.74px">/</b><b style="left:147.24px">f</b><b style="left:150.97px">o</b><b style="left:158.39px">r</b><b style="left:162.97px">n</b><b style="left:170.09px">i</b><b style="left:173.24px">t</b><b style="left:176.97px">o</b><b style="left:184.39px">r</b><b style="left:188.97px">e</b></div>
<div class="tt" style="left:20.5px;top:516.85px;font-size:12.7px;line-height:12.7px;color:#000;"><b style="left:-0.74px;transform:scaleX(0.874)">S</b><b style="left:6.97px">e</b><b style="left:14.39px">r</b><b style="left:19.09px">i</b><b style="left:21.97px">e</b><b style="left:32.97px">p</b><b style="left:40.39px">r</b><b style="left:44.97px">o</b><b style="left:51.97px">p</b><b style="left:58.97px">o</b><b style="left:65.83px">s</b><b style="left:72.24px">t</b><b style="left:75.97px">a</b><b style="left:86.97px">d</b><b style="left:93.97px">o</b><b style="left:100.83px">c</b><b style="left:106.97px">u</b><b style="left:114.21px">m</b><b style="left:124.97px">e</b><b style="left:131.97px">n</b><b style="left:139.24px">t</b><b style="left:143.09px">i</b><b style="left:149.97px">e</b><b style="left:157.21px">m</b><b style="left:167.97px">e</b><b style="left:174.82px">s</b><b style="left:180.82px">s</b><b style="left:187.09px">i</b></div>
<div class="tt" style="left:20.5px;top:546.85px;font-size:12.7px;line-height:12.7px;color:#000;"><b style="left:-0.74px;transform:scaleX(0.874)">S</b><b style="left:6.97px">e</b><b style="left:14.39px">r</b><b style="left:19.09px">i</b><b style="left:21.97px">e</b><b style="left:32.97px">p</b><b style="left:40.39px">r</b><b style="left:44.97px">o</b><b style="left:52.24px">t</b><b style="left:55.97px">o</b><b style="left:62.83px">c</b><b style="left:68.97px">o</b><b style="left:76.09px">l</b><b style="left:79.09px">l</b><b style="left:81.97px">o</b><b style="left:92.97px">p</b><b style="left:100.39px">r</b><b style="left:104.97px">o</b><b style="left:111.97px">p</b><b style="left:118.97px">o</b><b style="left:125.83px">s</b><b style="left:132.24px">t</b><b style="left:135.97px">a</b><b style="left:146.97px">d</b><b style="left:153.97px">o</b><b style="left:160.82px">c</b><b style="left:166.97px">u</b><b style="left:174.21px">m</b><b style="left:184.97px">e</b><b style="left:191.97px">n</b><b style="left:199.24px">t</b><b style="left:203.09px">i</b><b style="left:210.39px">r</b><b style="left:215.09px">i</b><b style="left:217.82px">c</b><b style="left:223.97px">e</b><b style="left:231.32px">v</b><b style="left:237.97px">u</b><b style="left:245.24px">t</b><b style="left:249.09px">i</b></div>
<div class="tt" style="left:20.5px;top:575.85px;font-size:12.7px;line-height:12.7px;color:#000;"><b style="left:-0.94px;transform:scaleX(0.850)">G</b><b style="left:7.97px">e</b><b style="left:14.82px">s</b><b style="left:21.24px">t</b><b style="left:25.74px">.</b><b style="left:33.97px">d</b><b style="left:40.97px">a</b><b style="left:48.24px">t</b><b style="left:51.97px">a</b><b style="left:62.83px">c</b><b style="left:68.97px">o</b><b style="left:76.21px">m</b><b style="left:86.97px">p</b><b style="left:94.74px">.</b><b style="left:103.09px">i</b><b style="left:106.33px">v</b><b style="left:112.97px">a</b></div>
<div class="tt" style="left:20.5px;top:605.85px;font-size:12.7px;line-height:12.7px;color:#000;"><b style="left:-0.38px;transform:scaleX(0.954)">T</b><b style="left:7.09px">i</b><b style="left:9.97px">p</b><b style="left:16.97px">o</b><b style="left:27.97px">u</b><b style="left:34.83px">s</b><b style="left:40.97px">o</b><b style="left:51.83px">c</b><b style="left:57.97px">a</b><b style="left:64.97px">u</b><b style="left:71.83px">s</b><b style="left:77.97px">a</b><b style="left:85.09px">l</b><b style="left:87.97px">e</b></div>
<div class="tt" style="left:20.5px;top:634.85px;font-size:12.7px;line-height:12.7px;color:#000;"><b style="left:-0.38px;transform:scaleX(0.954)">T</b><b style="left:7.09px">i</b><b style="left:9.97px">p</b><b style="left:16.97px">o</b><b style="left:27.82px">c</b><b style="left:33.97px">o</b><b style="left:40.97px">n</b><b style="left:48.24px">t</b><b style="left:51.97px">a</b><b style="left:58.97px">b</b><b style="left:66.74px">.</b><b style="left:74.97px">a</b><b style="left:81.97px">b</b><b style="left:89.09px">i</b><b style="left:92.09px">l</b><b style="left:95.09px">i</b><b style="left:98.24px">t</b><b style="left:101.97px">a</b><b style="left:109.24px">t</b><b style="left:112.97px">a</b></div>
<div class="tt" style="left:20.5px;top:664.85px;font-size:12.7px;line-height:12.7px;color:#000;"><b style="left:-0.38px;transform:scaleX(0.954)">T</b><b style="left:7.09px">i</b><b style="left:9.97px">p</b><b style="left:16.97px">o</b><b style="left:28.21px">m</b><b style="left:38.97px">o</b><b style="left:46.33px">v</b><b style="left:53.09px">i</b><b style="left:56.21px">m</b><b style="left:66.97px">e</b><b style="left:73.97px">n</b><b style="left:81.24px">t</b><b style="left:84.97px">o</b><b style="left:96.09px">i</b><b style="left:98.97px">n</b><b style="left:106.24px">t</b><b style="left:109.97px">e</b><b style="left:116.97px">g</b><b style="left:124.39px">r</b><b style="left:128.97px">a</b><b style="left:136.24px">t</b><b style="left:140.09px">i</b><b style="left:143.32px">v</b><b style="left:149.97px">o</b><b style="left:157.74px">/</b><b style="left:161.97px">n</b><b style="left:168.97px">o</b><b style="left:176.39px">r</b><b style="left:181.21px">m</b><b style="left:191.97px">a</b><b style="left:199.09px">l</b><b style="left:201.97px">e</b></div>
<div class="tt" style="left:20.5px;top:693.85px;font-size:12.7px;line-height:12.7px;color:#000;"><b style="left:-1.09px;transform:scaleX(0.807)">C</b><b style="left:6.97px">o</b><b style="left:13.97px">d</b><b style="left:21.74px">.</b><b style="left:29.97px">p</b><b style="left:37.09px">i</b><b style="left:39.97px">a</b><b style="left:46.97px">n</b><b style="left:53.97px">o</b><b style="left:64.97px">d</b><b style="left:71.97px">e</b><b style="left:79.09px">i</b><b style="left:85.83px">c</b><b style="left:91.97px">o</b><b style="left:98.97px">n</b><b style="left:106.24px">t</b><b style="left:110.09px">i</b></div>
<div class="r" style="left:376px;top:510px;width:37px;height:25px;background:#f0f8fd;"></div>
<div class="r" style="left:376px;top:540px;width:37px;height:25px;background:#f0f8fd;"></div>
<div class="r" style="left:376px;top:569px;width:163px;height:25px;background:#f0f8fd;"></div>
<div class="tt" style="left:379px;top:575.85px;font-size:12.7px;line-height:12.7px;color:#000;"><b style="left:-0.74px;transform:scaleX(0.874)">S</b><b style="left:6.97px">o</b><b style="left:14.09px">l</b><b style="left:16.97px">o</b><b style="left:28.09px">i</b><b style="left:30.97px">n</b><b style="left:42.09px">l</b><b style="left:45.09px">i</b><b style="left:47.97px">q</b><b style="left:54.97px">u</b><b style="left:62.09px">i</b><b style="left:64.97px">d</b><b style="left:71.97px">a</b><b style="left:78.83px">z</b><b style="left:85.09px">i</b><b style="left:87.97px">o</b><b style="left:94.97px">n</b><b style="left:101.97px">e</b></div>
<svg class="i" style="left:525.5px;top:579px;" width="8" height="5" viewBox="0 0 8 5"><path d="M0.3 0.3H7.7L4 4.4Z" fill="#465570"/></svg>
<div class="r" style="left:376px;top:599px;width:163px;height:25px;background:#f0f8fd;"></div>
<div class="tt" style="left:379px;top:605.85px;font-size:12.7px;line-height:12.7px;color:#000;"><b style="left:-0.74px;transform:scaleX(0.874)">S</b><b style="left:6.97px">e</b><b style="left:14.21px">m</b><b style="left:24.97px">p</b><b style="left:32.39px">r</b><b style="left:36.97px">e</b></div>
<svg class="i" style="left:525.5px;top:609px;" width="8" height="5" viewBox="0 0 8 5"><path d="M0.3 0.3H7.7L4 4.4Z" fill="#465570"/></svg>
<div class="r" style="left:376px;top:628px;width:163px;height:25px;background:#f0f8fd;"></div>
<div class="tt" style="left:379px;top:634.85px;font-size:12.7px;line-height:12.7px;color:#000;"><b style="left:-0.74px;transform:scaleX(0.874)">S</b><b style="left:6.97px">o</b><b style="left:14.09px">l</b><b style="left:16.97px">o</b><b style="left:27.97px">a</b><b style="left:34.83px">z</b><b style="left:41.09px">i</b><b style="left:43.97px">e</b><b style="left:50.97px">n</b><b style="left:57.97px">d</b><b style="left:64.97px">e</b></div>
<svg class="i" style="left:525.5px;top:638px;" width="8" height="5" viewBox="0 0 8 5"><path d="M0.3 0.3H7.7L4 4.4Z" fill="#465570"/></svg>
<div class="r" style="left:376px;top:658px;width:163px;height:25px;background:#f0f8fd;"></div>
<div class="tt" style="left:379px;top:664.85px;font-size:12.7px;line-height:12.7px;color:#000;"><b style="left:-0.74px;transform:scaleX(0.874)">E</b><b style="left:6.97px">n</b><b style="left:14.24px">t</b><b style="left:18.39px">r</b><b style="left:22.97px">a</b><b style="left:30.21px">m</b><b style="left:40.97px">b</b><b style="left:48.09px">i</b></div>
<svg class="i" style="left:525.5px;top:668px;" width="8" height="5" viewBox="0 0 8 5"><path d="M0.3 0.3H7.7L4 4.4Z" fill="#465570"/></svg>
<div class="r" style="left:376px;top:687px;width:163px;height:25px;background:#e8e8e8;"></div>
<svg class="i" style="left:523px;top:694px;" width="11" height="11" viewBox="0 0 11 11"><circle cx="6.8" cy="4.3" r="2.9" fill="none" stroke="#b5b5b5" stroke-width="1.35"/><path d="M4.7 6.5L1 10.2" stroke="#b5b5b5" stroke-width="1.6" stroke-linecap="round"/></svg>
<div class="tt" style="left:568.5px;top:428.85px;font-size:12.7px;line-height:12.7px;color:#000;"><b style="left:-1.09px;transform:scaleX(0.807)">C</b><b style="left:6.97px">a</b><b style="left:13.97px">u</b><b style="left:20.82px">s</b><b style="left:26.97px">a</b><b style="left:34.09px">l</b><b style="left:36.97px">e</b><b style="left:47.97px">p</b><b style="left:55.39px">r</b><b style="left:59.97px">o</b><b style="left:66.97px">p</b><b style="left:74.74px">.</b><b style="left:82.41px;transform:scaleX(0.916)">D</b><b style="left:90.76px;transform:scaleX(0.992)">A</b><b style="left:98.41px;transform:scaleX(0.916)">R</b><b style="left:106.26px;transform:scaleX(0.874)">E</b></div>
<div class="r" style="left:709px;top:422px;width:93px;height:25px;background:#f0f8fd;"></div>
<div class="tt" style="left:772.4px;top:428.85px;font-size:12.7px;line-height:12.7px;color:#000;"><b style="left:-0.03px">0</b></div>
<svg class="i" style="left:786.5px;top:429px;" width="11" height="11" viewBox="0 0 11 11"><circle cx="6.8" cy="4.3" r="2.9" fill="none" stroke="#475570" stroke-width="1.35"/><path d="M4.7 6.5L1 10.2" stroke="#475570" stroke-width="1.6" stroke-linecap="round"/></svg>
<div class="tt" style="left:568.5px;top:457.85px;font-size:12.7px;line-height:12.7px;color:#000;"><b style="left:-1.09px;transform:scaleX(0.807)">C</b><b style="left:6.97px">a</b><b style="left:13.97px">u</b><b style="left:20.82px">s</b><b style="left:26.97px">a</b><b style="left:34.09px">l</b><b style="left:36.97px">e</b><b style="left:47.97px">p</b><b style="left:55.39px">r</b><b style="left:59.97px">o</b><b style="left:66.97px">p</b><b style="left:74.74px">.</b><b style="left:82.76px;transform:scaleX(0.992)">A</b><b style="left:90.76px;transform:scaleX(0.992)">V</b><b style="left:98.26px;transform:scaleX(0.874)">E</b><b style="left:105.41px;transform:scaleX(0.916)">R</b><b style="left:113.26px;transform:scaleX(0.874)">E</b></div>
<div class="r" style="left:709px;top:451px;width:93px;height:25px;background:#f0f8fd;"></div>
<div class="tt" style="left:772.4px;top:457.85px;font-size:12.7px;line-height:12.7px;color:#000;"><b style="left:-0.03px">0</b></div>
<svg class="i" style="left:786.5px;top:458px;" width="11" height="11" viewBox="0 0 11 11"><circle cx="6.8" cy="4.3" r="2.9" fill="none" stroke="#475570" stroke-width="1.35"/><path d="M4.7 6.5L1 10.2" stroke="#475570" stroke-width="1.6" stroke-linecap="round"/></svg>
<div class="tt" style="left:1116.5px;top:428.85px;font-size:12.7px;line-height:12.7px;color:#000;"><b style="left:-0.74px;transform:scaleX(0.874)">S</b><b style="left:6.97px">e</b><b style="left:14.21px">m</b><b style="left:24.97px">p</b><b style="left:32.09px">l</b><b style="left:35.09px">i</b><b style="left:38.24px">f</b><b style="left:42.09px">i</b><b style="left:44.83px">c</b><b style="left:50.97px">a</b><b style="left:58.24px">t</b><b style="left:61.97px">a</b></div>
<div class="r" style="left:1257px;top:422px;width:93px;height:25px;background:#f0f8fd;"></div>
<div class="tt" style="left:1320.5px;top:428.85px;font-size:12.7px;line-height:12.7px;color:#000;"><b style="left:-0.03px">0</b></div>
<svg class="i" style="left:1334.5px;top:429px;" width="11" height="11" viewBox="0 0 11 11"><circle cx="6.8" cy="4.3" r="2.9" fill="none" stroke="#475570" stroke-width="1.35"/><path d="M4.7 6.5L1 10.2" stroke="#475570" stroke-width="1.6" stroke-linecap="round"/></svg>
<div class="tt" style="left:1116.5px;top:457.85px;font-size:12.7px;line-height:12.7px;color:#000;"><b style="left:-0.74px;transform:scaleX(0.874)">P</b><b style="left:7.39px">r</b><b style="left:11.97px">o</b><b style="left:19.24px">f</b><b style="left:23.74px">.</b><b style="left:31.97px">o</b><b style="left:39.39px">r</b><b style="left:43.97px">d</b><b style="left:51.09px">i</b><b style="left:53.97px">n</b><b style="left:60.97px">a</b><b style="left:68.39px">r</b><b style="left:73.09px">i</b><b style="left:75.97px">a</b></div>
<div class="r" style="left:1257px;top:451px;width:93px;height:25px;background:#f0f8fd;"></div>
<div class="tt" style="left:1320.5px;top:457.85px;font-size:12.7px;line-height:12.7px;color:#000;"><b style="left:-0.03px">0</b></div>
<svg class="i" style="left:1334.5px;top:458px;" width="11" height="11" viewBox="0 0 11 11"><circle cx="6.8" cy="4.3" r="2.9" fill="none" stroke="#475570" stroke-width="1.35"/><path d="M4.7 6.5L1 10.2" stroke="#475570" stroke-width="1.6" stroke-linecap="round"/></svg>
<div class="tt" style="left:1116.5px;top:487.85px;font-size:12.7px;line-height:12.7px;color:#000;"><b style="left:-0.74px;transform:scaleX(0.874)">P</b><b style="left:7.39px">r</b><b style="left:11.97px">o</b><b style="left:19.24px">f</b><b style="left:23.74px">.</b><b style="left:31.82px">s</b><b style="left:37.97px">e</b><b style="left:45.21px">m</b><b style="left:55.97px">p</b><b style="left:63.09px">l</b><b style="left:66.09px">i</b><b style="left:69.24px">f</b><b style="left:73.09px">i</b><b style="left:75.83px">c</b><b style="left:81.97px">a</b><b style="left:89.24px">t</b><b style="left:92.97px">a</b></div>
<div class="r" style="left:1257px;top:481px;width:93px;height:25px;background:#f0f8fd;"></div>
<div class="tt" style="left:1320.5px;top:487.85px;font-size:12.7px;line-height:12.7px;color:#000;"><b style="left:-0.03px">0</b></div>
<svg class="i" style="left:1334.5px;top:488px;" width="11" height="11" viewBox="0 0 11 11"><circle cx="6.8" cy="4.3" r="2.9" fill="none" stroke="#475570" stroke-width="1.35"/><path d="M4.7 6.5L1 10.2" stroke="#475570" stroke-width="1.6" stroke-linecap="round"/></svg>
</div></div>
<div class="r" style="left:7px;top:706px;width:1665px;height:305px;background:#fff;border:1px solid #2e5d74;"></div>
<div class="r" style="left:7px;top:731px;width:1665px;height:1px;background:#2e5d74;"></div>
<div class="tt" style="left:15.8px;top:713.85px;font-size:12.7px;line-height:12.7px;color:#28648c;"><b style="left:-0.74px;transform:scaleX(0.874)">P</b><b style="left:6.41px;transform:scaleX(0.916)">R</b><b style="left:14.26px;transform:scaleX(0.874)">E</b><b style="left:22.54px">I</b><b style="left:26.31px;transform:scaleX(0.983)">M</b><b style="left:35.86px;transform:scaleX(0.874)">P</b><b style="left:43.16px;transform:scaleX(0.952)">O</b><b style="left:51.86px;transform:scaleX(0.874)">S</b><b style="left:59.22px;transform:scaleX(0.954)">T</b><b style="left:66.36px;transform:scaleX(0.992)">A</b><b style="left:74.22px;transform:scaleX(0.954)">Z</b><b style="left:82.14px">I</b><b style="left:85.76px;transform:scaleX(0.952)">O</b><b style="left:94.61px;transform:scaleX(0.916)">N</b><b style="left:102.46px;transform:scaleX(0.874)">E</b><b style="left:113.11px;transform:scaleX(0.807)">C</b><b style="left:120.76px;transform:scaleX(0.952)">O</b><b style="left:129.61px;transform:scaleX(0.916)">N</b><b style="left:137.82px;transform:scaleX(0.954)">T</b><b style="left:144.61px;transform:scaleX(0.916)">R</b><b style="left:152.76px;transform:scaleX(0.952)">O</b><b style="left:161.46px;transform:scaleX(0.874)">P</b><b style="left:168.96px;transform:scaleX(0.992)">A</b><b style="left:176.61px;transform:scaleX(0.916)">R</b><b style="left:184.82px;transform:scaleX(0.954)">T</b><b style="left:192.74px">I</b><b style="left:196.42px;transform:scaleX(0.954)">T</b><b style="left:203.06px;transform:scaleX(0.874)">E</b></div>
<div class="r" style="left:9px;top:760px;width:1661px;height:1px;background:#4a4a4a;"></div>
<svg class="i" style="left:22px;top:737px;" width="18" height="18" viewBox="0 0 18 18"><rect x="1" y="1" width="16" height="16" rx="2.5" fill="none" stroke="#5a90ab" stroke-width="1.5"/><path d="M4 5H14M4 8H14M4 11H14M4 14H14" stroke="#5a90ab" stroke-width="1.2"/><path d="M6 8H14M6 11H14" stroke="#9cc9e6" stroke-width="1.2"/></svg>
<div class="t" style="left:45px;top:739.30px;font-size:15px;line-height:15px;color:#000;font-weight:400;letter-spacing:0.15px;">Funzioni griglia</div>
<svg class="i" style="left:169px;top:736px;" width="19" height="20" viewBox="0 0 19 20"><path d="M1.5 5.5Q1 1 5 1H13Q17 1 16.5 5.5L11 11.5V18.5L8 16.5V11.5Z" fill="none" stroke="#5a90ab" stroke-width="1.4" stroke-linejoin="round"/><path d="M6.5 9.5H12M9.2 9.5V16" stroke="#5a90ab" stroke-width="1.4"/></svg>
<svg class="i" style="left:1493px;top:738px;" width="18" height="18" viewBox="0 0 18 18"><path d="M9 1V13M4 8.5L9 13.5L14 8.5" fill="none" stroke="#5a90ab" stroke-width="1.6"/><path d="M1 16.8H17" stroke="#5a90ab" stroke-width="1.6"/></svg>
<div class="t" style="left:1516.5px;top:739.30px;font-size:15px;line-height:15px;color:#000;font-weight:400;letter-spacing:-0.3px;">Esporta</div>
<svg class="i" style="left:1569px;top:745px;" width="6" height="4" viewBox="0 0 6 4"><path d="M0 0H5.5L2.75 3.5Z" fill="#000"/></svg>
<svg class="i" style="left:1596px;top:736px;" width="19" height="20" viewBox="0 0 19 20"><path d="M1 0.5V18.5H18.5" fill="none" stroke="#5a90ab" stroke-width="1.3"/><path d="M3.5 15L7.5 9.5L10 12.5L14.5 3.5L17 7.5" fill="none" stroke="#5a90ab" stroke-width="1.5" stroke-linejoin="round"/></svg>
<svg class="i" style="left:1640px;top:738px;" width="13" height="15" viewBox="0 0 13 15"><rect x="0" y="0" width="5.5" height="4.3" fill="#5a90ab"/><rect x="7.5" y="0" width="5.5" height="4.3" fill="#5a90ab"/><rect x="0" y="5.4" width="5.5" height="4.3" fill="#5a90ab"/><rect x="7.5" y="5.4" width="5.5" height="4.3" fill="#5a90ab"/><rect x="0" y="10.8" width="5.5" height="4.3" fill="#5a90ab"/><rect x="7.5" y="10.8" width="5.5" height="4.3" fill="#5a90ab"/></svg>
<div style="position:absolute;left:9px;top:770px;width:1661px;height:220px;overflow:hidden;">
<div style="position:absolute;left:-9px;top:-770px;width:1900px;height:1012px;">
<div class="r" style="left:9px;top:780px;width:1891px;height:25px;background:#f0f0f0;"></div>
<div class="r" style="left:9px;top:781px;width:75px;height:23px;background:#ffffff;"></div>
<div class="r" style="left:9px;top:780px;width:1891px;height:1px;background:#8a9bb0;"></div>
<div class="r" style="left:9px;top:804px;width:1891px;height:1px;background:#8a9bb0;"></div>
<div class="r" style="left:84px;top:781px;width:1px;height:23px;background:#9aabbf;"></div>
<div class="r" style="left:173px;top:781px;width:1px;height:23px;background:#9aabbf;"></div>
<div class="r" style="left:262px;top:781px;width:1px;height:23px;background:#9aabbf;"></div>
<div class="r" style="left:419px;top:781px;width:1px;height:23px;background:#9aabbf;"></div>
<div class="r" style="left:524px;top:781px;width:1px;height:23px;background:#9aabbf;"></div>
<div class="r" style="left:625px;top:781px;width:1px;height:23px;background:#9aabbf;"></div>
<div class="r" style="left:740px;top:781px;width:1px;height:23px;background:#9aabbf;"></div>
<div class="r" style="left:845px;top:781px;width:1px;height:23px;background:#9aabbf;"></div>
<div class="r" style="left:901px;top:781px;width:1px;height:23px;background:#9aabbf;"></div>
<div class="r" style="left:997px;top:781px;width:1px;height:23px;background:#9aabbf;"></div>
<div class="r" style="left:1087px;top:781px;width:1px;height:23px;background:#9aabbf;"></div>
<div class="r" style="left:1267px;top:781px;width:1px;height:23px;background:#9aabbf;"></div>
<div class="r" style="left:1469px;top:781px;width:1px;height:23px;background:#9aabbf;"></div>
<div class="r" style="left:1627px;top:781px;width:1px;height:23px;background:#9aabbf;"></div>
<div class="tt" style="left:13.8px;top:785.85px;font-size:12.7px;line-height:12.7px;color:#000;"><b style="left:-0.59px;transform:scaleX(0.916)">R</b><b style="left:8.09px">i</b><b style="left:10.97px">g</b><b style="left:17.97px">a</b></div>
<div class="tt" style="left:91px;top:785.85px;font-size:12.7px;line-height:12.7px;color:#000;"><b style="left:-0.44px;transform:scaleX(0.952)">O</b><b style="left:9.39px">r</b><b style="left:13.97px">d</b><b style="left:21.09px">i</b><b style="left:23.97px">n</b><b style="left:30.97px">a</b><b style="left:38.21px">m</b><b style="left:49.74px">.</b></div>
<div class="tt" style="left:180px;top:785.85px;font-size:12.7px;line-height:12.7px;color:#000;"><b style="left:-0.74px;transform:scaleX(0.874)">E</b><b style="left:7.09px">l</b><b style="left:10.09px">i</b><b style="left:13.21px">m</b><b style="left:24.09px">i</b><b style="left:26.97px">n</b><b style="left:33.97px">a</b><b style="left:41.24px">t</b><b style="left:44.97px">o</b><b style="left:52.74px">.</b></div>
<div class="tt" style="left:269px;top:785.85px;font-size:12.7px;line-height:12.7px;color:#000;"><b style="left:-0.59px;transform:scaleX(0.916)">D</b><b style="left:7.76px;transform:scaleX(0.992)">A</b></div>
<div class="tt" style="left:426px;top:785.85px;font-size:12.7px;line-height:12.7px;color:#000;"><b style="left:-0.38px;transform:scaleX(0.954)">T</b><b style="left:7.09px">i</b><b style="left:9.97px">p</b><b style="left:16.97px">o</b><b style="left:27.82px">c</b><b style="left:33.97px">o</b><b style="left:40.97px">n</b><b style="left:48.24px">t</b><b style="left:51.97px">o</b></div>
<div class="tt" style="left:531px;top:785.85px;font-size:12.7px;line-height:12.7px;color:#000;"><b style="left:-1.09px;transform:scaleX(0.807)">C</b><b style="left:6.97px">o</b><b style="left:13.97px">d</b><b style="left:21.74px">.</b><b style="left:28.91px;transform:scaleX(0.807)">C</b><b style="left:36.97px">o</b><b style="left:43.97px">n</b><b style="left:51.24px">t</b><b style="left:54.97px">o</b></div>
<div class="tt" style="left:632px;top:785.85px;font-size:12.7px;line-height:12.7px;color:#000;"><b style="left:-0.59px;transform:scaleX(0.916)">D</b><b style="left:7.97px">e</b><b style="left:14.82px">s</b><b style="left:20.82px">c</b><b style="left:27.39px">r</b><b style="left:32.74px">.</b><b style="left:40.83px">c</b><b style="left:46.97px">o</b><b style="left:53.97px">n</b><b style="left:61.24px">t</b><b style="left:64.97px">o</b></div>
<div class="tt" style="left:747px;top:785.85px;font-size:12.7px;line-height:12.7px;color:#000;"><b style="left:-1.09px;transform:scaleX(0.807)">C</b><b style="left:6.97px">o</b><b style="left:13.97px">d</b><b style="left:21.74px">.</b><b style="left:28.91px;transform:scaleX(0.807)">C</b><b style="left:36.97px">o</b><b style="left:43.97px">n</b><b style="left:51.24px">t</b><b style="left:55.39px">r</b><b style="left:59.97px">o</b><b style="left:66.97px">p</b></div>
<div class="tt" style="left:852px;top:785.85px;font-size:12.7px;line-height:12.7px;color:#000;"><b style="left:-0.59px;transform:scaleX(0.916)">D</b><b style="left:7.97px">e</b><b style="left:14.82px">s</b><b style="left:20.82px">c</b><b style="left:27.74px">.</b><b style="left:32.74px">.</b><b style="left:37.74px">.</b></div>
<div class="tt" style="left:908px;top:785.85px;font-size:12.7px;line-height:12.7px;color:#000;"><b style="left:-1.09px;transform:scaleX(0.807)">C</b><b style="left:6.97px">o</b><b style="left:13.97px">d</b><b style="left:21.74px">.</b><b style="left:29.71px;transform:scaleX(0.983)">M</b><b style="left:39.97px">a</b><b style="left:46.83px">s</b><b style="left:53.24px">t</b><b style="left:57.39px">r</b><b style="left:61.97px">o</b></div>
<div class="tt" style="left:1004px;top:785.85px;font-size:12.7px;line-height:12.7px;color:#000;"><b style="left:-0.59px;transform:scaleX(0.916)">D</b><b style="left:7.97px">e</b><b style="left:14.82px">s</b><b style="left:20.82px">c</b><b style="left:27.39px">r</b><b style="left:32.74px">.</b><b style="left:41.21px">m</b><b style="left:51.97px">a</b><b style="left:58.83px">s</b><b style="left:65.74px">.</b><b style="left:70.74px">.</b><b style="left:75.74px">.</b></div>
<div class="tt" style="left:1094px;top:785.85px;font-size:12.7px;line-height:12.7px;color:#000;"><b style="left:-0.38px;transform:scaleX(0.954)">T</b><b style="left:7.09px">i</b><b style="left:9.97px">p</b><b style="left:16.97px">o</b><b style="left:27.97px">p</b><b style="left:35.39px">r</b><b style="left:39.97px">o</b><b style="left:46.97px">p</b><b style="left:53.97px">o</b><b style="left:60.83px">s</b><b style="left:67.24px">t</b><b style="left:70.97px">a</b></div>
<div class="tt" style="left:1274px;top:785.85px;font-size:12.7px;line-height:12.7px;color:#000;"><b style="left:-0.24px;transform:scaleX(0.992)">A</b><b style="left:7.97px">u</b><b style="left:15.24px">t</b><b style="left:18.97px">o</b><b style="left:26.21px">m</b><b style="left:37.74px">.</b><b style="left:45.97px">p</b><b style="left:53.39px">r</b><b style="left:57.97px">o</b><b style="left:64.97px">p</b><b style="left:72.74px">.</b><b style="left:80.83px">c</b><b style="left:86.97px">o</b><b style="left:93.97px">n</b><b style="left:101.24px">t</b><b style="left:104.97px">o</b></div>
<div class="tt" style="left:1476px;top:785.85px;font-size:12.7px;line-height:12.7px;color:#000;"><b style="left:-0.24px;transform:scaleX(0.992)">A</b><b style="left:7.97px">u</b><b style="left:15.24px">t</b><b style="left:18.97px">o</b><b style="left:26.21px">m</b><b style="left:37.74px">.</b><b style="left:45.97px">p</b><b style="left:53.39px">r</b><b style="left:57.97px">o</b><b style="left:64.97px">p</b><b style="left:72.74px">.</b><b style="left:80.83px">c</b><b style="left:86.97px">o</b><b style="left:93.97px">n</b><b style="left:101.24px">t</b><b style="left:105.39px">r</b><b style="left:109.97px">o</b><b style="left:116.97px">p</b><b style="left:124.74px">.</b></div>
<div class="tt" style="left:1634px;top:785.85px;font-size:12.7px;line-height:12.7px;color:#000;"><b style="left:-0.24px;transform:scaleX(0.992)">A</b><b style="left:7.97px">u</b><b style="left:15.24px">t</b><b style="left:18.97px">o</b><b style="left:26.21px">m</b><b style="left:37.74px">.</b><b style="left:45.97px">p</b><b style="left:53.39px">r</b><b style="left:57.97px">o</b><b style="left:64.97px">p</b><b style="left:72.74px">.</b></div>
<div class="r" style="left:9px;top:805px;width:75px;height:30px;background:#ffffff;"></div>
<div class="r" style="left:84px;top:805px;width:89px;height:30px;background:#bcd9f5;"></div>
<div class="r" style="left:173px;top:805px;width:89px;height:30px;background:#bcd9f5;"></div>
<div class="r" style="left:262px;top:805px;width:157px;height:30px;background:#bcd9f5;"></div>
<div class="r" style="left:419px;top:805px;width:105px;height:30px;background:#bcd9f5;"></div>
<div class="r" style="left:524px;top:805px;width:101px;height:30px;background:#bcd9f5;"></div>
<div class="r" style="left:625px;top:805px;width:115px;height:30px;background:#bcd9f5;"></div>
<div class="r" style="left:740px;top:805px;width:105px;height:30px;background:#bcd9f5;"></div>
<div class="r" style="left:845px;top:805px;width:56px;height:30px;background:#bcd9f5;"></div>
<div class="r" style="left:901px;top:805px;width:96px;height:30px;background:#bcd9f5;"></div>
<div class="r" style="left:997px;top:805px;width:90px;height:30px;background:#bcd9f5;"></div>
<div class="r" style="left:1087px;top:805px;width:180px;height:30px;background:#bcd9f5;"></div>
<div class="r" style="left:1267px;top:805px;width:202px;height:30px;background:#bcd9f5;"></div>
<div class="r" style="left:1469px;top:805px;width:158px;height:30px;background:#bcd9f5;"></div>
<div class="r" style="left:1627px;top:805px;width:173px;height:30px;background:#bcd9f5;"></div>
<div class="r" style="left:9px;top:835px;width:75px;height:31px;background:#e8e8e8;"></div>
<div class="r" style="left:84px;top:835px;width:89px;height:31px;background:#f0f8fd;"></div>
<div class="r" style="left:173px;top:835px;width:89px;height:31px;background:#f0f8fd;"></div>
<div class="r" style="left:262px;top:835px;width:157px;height:31px;background:#e8e8e8;"></div>
<div class="r" style="left:419px;top:835px;width:105px;height:31px;background:#f0f8fd;"></div>
<div class="r" style="left:524px;top:835px;width:101px;height:31px;background:#e8e8e8;"></div>
<div class="r" style="left:625px;top:835px;width:115px;height:31px;background:#e8e8e8;"></div>
<div class="r" style="left:740px;top:835px;width:105px;height:31px;background:#f0f8fd;"></div>
<div class="r" style="left:845px;top:835px;width:56px;height:31px;background:#e8e8e8;"></div>
<div class="r" style="left:901px;top:835px;width:96px;height:31px;background:#e8e8e8;"></div>
<div class="r" style="left:997px;top:835px;width:90px;height:31px;background:#e8e8e8;"></div>
<div class="r" style="left:1087px;top:835px;width:180px;height:31px;background:#e8e8e8;"></div>
<div class="r" style="left:1267px;top:835px;width:202px;height:31px;background:#f0f8fd;"></div>
<div class="r" style="left:1469px;top:835px;width:158px;height:31px;background:#f0f8fd;"></div>
<div class="r" style="left:1627px;top:835px;width:173px;height:31px;background:#f0f8fd;"></div>
<div class="r" style="left:9px;top:866px;width:1891px;height:1px;background:#d6d6d6;"></div>
<div class="r" style="left:9px;top:867px;width:75px;height:30px;background:#e8e8e8;"></div>
<div class="r" style="left:84px;top:867px;width:89px;height:30px;background:#ffffff;"></div>
<div class="r" style="left:173px;top:867px;width:89px;height:30px;background:#ffffff;"></div>
<div class="r" style="left:262px;top:867px;width:157px;height:30px;background:#e8e8e8;"></div>
<div class="r" style="left:419px;top:867px;width:105px;height:30px;background:#ffffff;"></div>
<div class="r" style="left:524px;top:867px;width:101px;height:30px;background:#e8e8e8;"></div>
<div class="r" style="left:625px;top:867px;width:115px;height:30px;background:#e8e8e8;"></div>
<div class="r" style="left:740px;top:867px;width:105px;height:30px;background:#ffffff;"></div>
<div class="r" style="left:845px;top:867px;width:56px;height:30px;background:#e8e8e8;"></div>
<div class="r" style="left:901px;top:867px;width:96px;height:30px;background:#e8e8e8;"></div>
<div class="r" style="left:997px;top:867px;width:90px;height:30px;background:#e8e8e8;"></div>
<div class="r" style="left:1087px;top:867px;width:180px;height:30px;background:#e8e8e8;"></div>
<div class="r" style="left:1267px;top:867px;width:202px;height:30px;background:#ffffff;"></div>
<div class="r" style="left:1469px;top:867px;width:158px;height:30px;background:#ffffff;"></div>
<div class="r" style="left:1627px;top:867px;width:173px;height:30px;background:#ffffff;"></div>
<div class="r" style="left:9px;top:897px;width:1891px;height:1px;background:#d6d6d6;"></div>
<div class="tt" style="left:74.8px;top:814.85px;font-size:12.7px;line-height:12.7px;color:#000;"><b style="left:-0.03px">1</b></div>
<div class="tt" style="left:163.8px;top:814.85px;font-size:12.7px;line-height:12.7px;color:#000;"><b style="left:-0.03px">1</b></div>
<svg class="i" style="left:207px;top:811.5px;" width="18" height="18" viewBox="0 0 18 18"><rect x="0.8" y="0.8" width="15.9" height="15.9" rx="3" fill="#ffffff" stroke="#c8c8c8" stroke-width="1.6"/></svg>
<div class="tt" style="left:265.6px;top:814.85px;font-size:12.7px;line-height:12.7px;color:#000;"><b style="left:-0.59px;transform:scaleX(0.916)">D</b><b style="left:7.97px">a</b><b style="left:15.39px">r</b><b style="left:19.97px">e</b></div>
<div class="tt" style="left:424px;top:814.85px;font-size:12.7px;line-height:12.7px;color:#000;"><b style="left:-0.38px;transform:scaleX(0.954)">F</b><b style="left:6.97px">o</b><b style="left:14.39px">r</b><b style="left:18.97px">n</b><b style="left:26.09px">i</b><b style="left:29.24px">t</b><b style="left:32.97px">o</b><b style="left:40.39px">r</b><b style="left:45.09px">i</b></div>
<div class="tt" style="left:615.8px;top:814.85px;font-size:12.7px;line-height:12.7px;color:#000;"><b style="left:-0.03px">0</b></div>
<div class="tt" style="left:835.8px;top:814.85px;font-size:12.7px;line-height:12.7px;color:#000;"><b style="left:-0.03px">0</b></div>
<div class="tt" style="left:987.8px;top:814.85px;font-size:12.7px;line-height:12.7px;color:#000;"><b style="left:-0.03px">0</b></div>
<div class="tt" style="left:1092px;top:814.85px;font-size:12.7px;line-height:12.7px;color:#000;"><b style="left:-0.74px;transform:scaleX(0.874)">P</b><b style="left:7.39px">r</b><b style="left:11.97px">o</b><b style="left:18.97px">p</b><b style="left:25.97px">o</b><b style="left:32.83px">s</b><b style="left:39.24px">t</b><b style="left:42.97px">o</b></div>
<div class="tt" style="left:1272px;top:814.85px;font-size:12.7px;line-height:12.7px;color:#000;"><b style="left:-1.09px;transform:scaleX(0.807)">C</b><b style="left:6.97px">o</b><b style="left:13.97px">n</b><b style="left:21.24px">t</b><b style="left:24.97px">o</b><b style="left:35.97px">o</b><b style="left:46.83px">c</b><b style="left:52.97px">o</b><b style="left:59.97px">n</b><b style="left:67.24px">t</b><b style="left:71.39px">r</b><b style="left:75.97px">o</b><b style="left:82.97px">p</b><b style="left:90.74px">.</b><b style="left:99.09px">i</b><b style="left:101.97px">n</b><b style="left:108.97px">d</b><b style="left:116.09px">i</b><b style="left:118.83px">c</b><b style="left:124.97px">a</b><b style="left:132.24px">t</b><b style="left:135.97px">a</b></div>
<div class="tt" style="left:1474px;top:814.85px;font-size:12.7px;line-height:12.7px;color:#000;"><b style="left:-0.59px;transform:scaleX(0.916)">N</b><b style="left:7.97px">e</b><b style="left:14.82px">s</b><b style="left:20.82px">s</b><b style="left:26.97px">u</b><b style="left:33.97px">n</b><b style="left:40.97px">o</b></div>
<div class="tt" style="left:1632px;top:814.85px;font-size:12.7px;line-height:12.7px;color:#000;"><b style="left:-0.59px;transform:scaleX(0.916)">N</b><b style="left:7.97px">e</b><b style="left:14.82px">s</b><b style="left:20.82px">s</b><b style="left:26.97px">u</b><b style="left:33.97px">n</b><b style="left:40.97px">o</b></div>
<div class="tt" style="left:74.8px;top:845.85px;font-size:12.7px;line-height:12.7px;color:#000;"><b style="left:-0.03px">2</b></div>
<div class="tt" style="left:163.8px;top:845.85px;font-size:12.7px;line-height:12.7px;color:#000;"><b style="left:-0.03px">2</b></div>
<svg class="i" style="left:207px;top:842.5px;" width="18" height="18" viewBox="0 0 18 18"><rect x="0.8" y="0.8" width="15.9" height="15.9" rx="3" fill="#ffffff" stroke="#c8c8c8" stroke-width="1.6"/></svg>
<div class="tt" style="left:265.6px;top:845.85px;font-size:12.7px;line-height:12.7px;color:#000;"><b style="left:-0.24px;transform:scaleX(0.992)">A</b><b style="left:8.32px">v</b><b style="left:14.97px">e</b><b style="left:22.39px">r</b><b style="left:26.97px">e</b></div>
<div class="tt" style="left:424px;top:845.85px;font-size:12.7px;line-height:12.7px;color:#000;"><b style="left:-0.74px;transform:scaleX(0.874)">S</b><b style="left:6.97px">o</b><b style="left:14.24px">t</b><b style="left:18.24px">t</b><b style="left:21.97px">o</b><b style="left:28.82px">c</b><b style="left:34.97px">o</b><b style="left:41.97px">n</b><b style="left:49.24px">t</b><b style="left:53.09px">i</b></div>
<div class="tt" style="left:615.8px;top:845.85px;font-size:12.7px;line-height:12.7px;color:#000;"><b style="left:-0.03px">0</b></div>
<div class="tt" style="left:835.8px;top:845.85px;font-size:12.7px;line-height:12.7px;color:#000;"><b style="left:-0.03px">0</b></div>
<div class="tt" style="left:987.8px;top:845.85px;font-size:12.7px;line-height:12.7px;color:#000;"><b style="left:-0.03px">0</b></div>
<div class="tt" style="left:1092px;top:845.85px;font-size:12.7px;line-height:12.7px;color:#000;"><b style="left:-0.74px;transform:scaleX(0.874)">P</b><b style="left:7.39px">r</b><b style="left:11.97px">o</b><b style="left:18.97px">p</b><b style="left:25.97px">o</b><b style="left:32.83px">s</b><b style="left:39.24px">t</b><b style="left:42.97px">o</b></div>
<div class="tt" style="left:1272px;top:845.85px;font-size:12.7px;line-height:12.7px;color:#000;"><b style="left:-1.09px;transform:scaleX(0.807)">C</b><b style="left:6.97px">o</b><b style="left:13.97px">n</b><b style="left:21.24px">t</b><b style="left:25.39px">r</b><b style="left:29.97px">o</b><b style="left:36.97px">p</b><b style="left:44.74px">.</b><b style="left:51.91px;transform:scaleX(0.807)">C</b><b style="left:60.09px">l</b><b style="left:63.09px">i</b><b style="left:66.74px">/</b><b style="left:70.62px;transform:scaleX(0.954)">F</b><b style="left:77.97px">o</b><b style="left:85.39px">r</b><b style="left:93.97px">p</b><b style="left:101.39px">r</b><b style="left:106.09px">i</b><b style="left:109.21px">m</b><b style="left:119.97px">a</b><b style="left:131.39px">r</b><b style="left:136.09px">i</b><b style="left:138.97px">g</b><b style="left:145.97px">a</b></div>
<div class="tt" style="left:1474px;top:845.85px;font-size:12.7px;line-height:12.7px;color:#000;"><b style="left:-1.09px;transform:scaleX(0.807)">C</b><b style="left:6.97px">o</b><b style="left:13.97px">n</b><b style="left:21.24px">t</b><b style="left:24.97px">o</b><b style="left:36.39px">r</b><b style="left:41.09px">i</b><b style="left:43.97px">g</b><b style="left:50.97px">a</b><b style="left:61.97px">1</b></div>
<div class="tt" style="left:1632px;top:845.85px;font-size:12.7px;line-height:12.7px;color:#000;"><b style="left:-0.59px;transform:scaleX(0.916)">R</b><b style="left:7.97px">e</b><b style="left:14.82px">s</b><b style="left:21.09px">i</b><b style="left:23.97px">d</b><b style="left:30.97px">u</b><b style="left:37.97px">o</b></div>
<svg class="i" style="left:207px;top:873.5px;" width="18" height="18" viewBox="0 0 18 18"><rect x="0.8" y="0.8" width="15.9" height="15.9" rx="3" fill="#dcdcdc" stroke="#c8c8c8" stroke-width="1.6"/></svg>
</div></div>
<div class="r" style="left:71px;top:988px;width:1599px;height:21px;background:#f0f0f0;"></div>
<svg class="i" style="left:11px;top:995px;" width="10" height="8" viewBox="0 0 10 8"><rect x="0.5" y="0" width="1.6" height="8" fill="#8a8a8a"/><path d="M6 0V8L2 4Z M10 0V8L6 4Z" fill="#8a8a8a"/></svg>
<div class="tt" style="left:30px;top:992.85px;font-size:12.7px;line-height:12.7px;color:#000;"><b style="left:-0.03px">1</b><b style="left:7.74px">/</b><b style="left:11.97px">2</b></div>
<div class="r" style="left:56px;top:988px;width:15px;height:21px;background:#eef7fd;"></div>
<svg class="i" style="left:59px;top:995px;" width="10" height="8" viewBox="0 0 10 8"><rect x="7.6" y="0" width="1.6" height="8" fill="#4d5b7c"/><path d="M0 0V8L4 4Z M4 0V8L8 4Z" fill="#4d5b7c"/></svg>
<svg class="i" style="left:78px;top:993px;" width="7" height="10" viewBox="0 0 7 10"><path d="M6 0V10L0.5 5Z" fill="#8a8a8a"/></svg>
<div class="r" style="left:94px;top:992px;width:542px;height:14px;background:#858585;"></div>
<svg class="i" style="left:1656px;top:993px;" width="7" height="10" viewBox="0 0 7 10"><path d="M1 0V10L6.5 5Z" fill="#8a8a8a"/></svg>
</body></html>
